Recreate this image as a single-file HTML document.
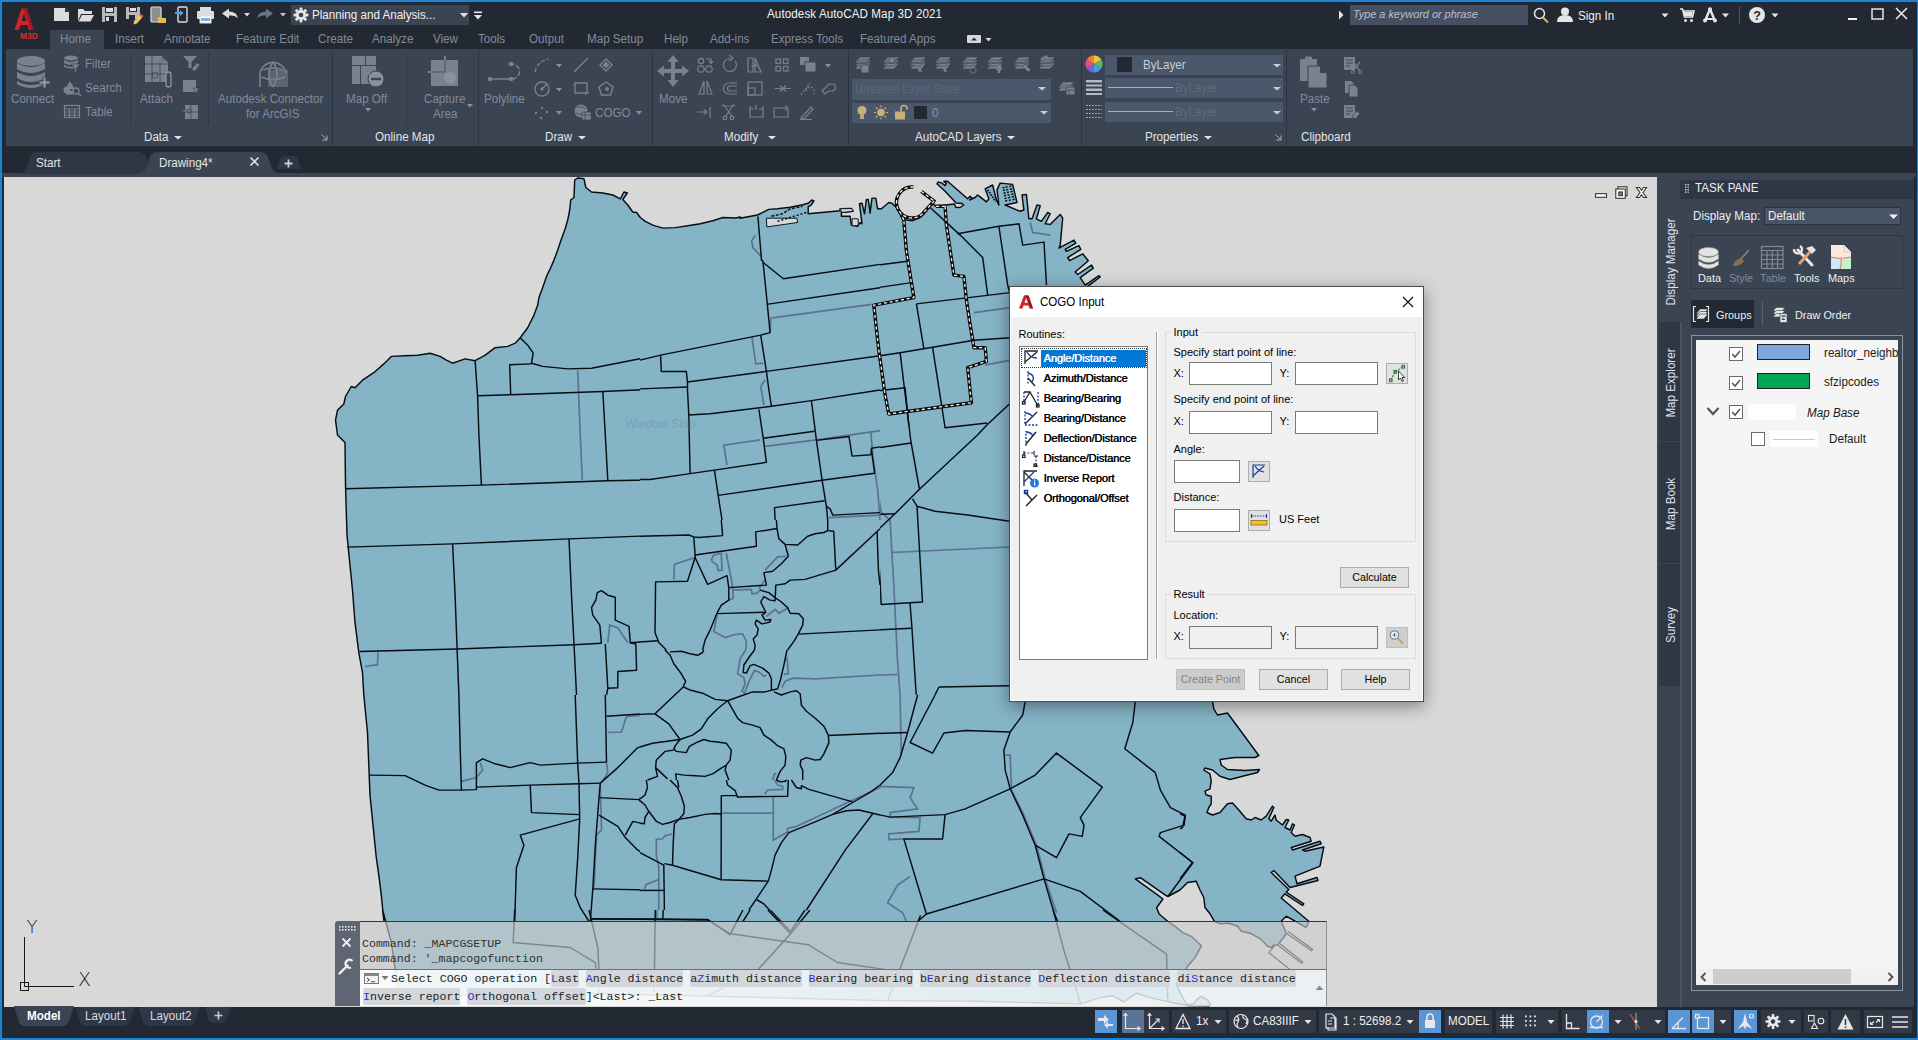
<!DOCTYPE html>
<html lang="en"><head><meta charset="utf-8"><title>Autodesk AutoCAD Map 3D 2021</title>
<style>
*{box-sizing:border-box;margin:0;padding:0}
html,body{width:1918px;height:1040px;overflow:hidden}
body{position:relative;background:#222933;font-family:"Liberation Sans",sans-serif;font-size:12px;color:#e6e6e6}
.a{position:absolute}
.t{position:absolute;white-space:nowrap;line-height:1}
svg{position:absolute;overflow:visible}
.dim{color:#828b9a}
.w{color:#e8e8e8}
.mono{font-family:"Liberation Mono","DejaVu Sans Mono",monospace}
.dlg{font-family:"Liberation Sans",sans-serif;color:#000;font-size:11px}
.inp{position:absolute;background:#fff;border:1px solid #7a7a7a}
.btn{position:absolute;background:#e1e1e1;border:1px solid #adadad;text-align:center;color:#000;font-size:10.7px;line-height:19px}
</style>
</head>
<body>
<div class="a" style="left:0;top:0;width:1918px;height:1040px;background:#1a84d8"></div>
<div class="a" style="left:1.5px;top:1.5px;width:1915px;height:1036px;background:#222933"></div>
<svg style="left:12px;top:6px" width="30" height="36" viewBox="0 0 30 36">
<path d="M2.500 24 L9.500 2.500 L15 2.500 L21.500 24 L17 24 L15.500 19 L8.500 19 L7 24 Z M9.800 15 L14.300 15 L12 7 Z" fill="#d2232a" fill-rule="evenodd"/>
<path d="M9.500 2.500 L15 2.500 L21.500 24 L19 24 L12.500 4.500 Z" fill="#a3151c"/>
<text x="17" y="33" font-family="Liberation Sans, sans-serif" font-weight="bold" font-size="8.5" fill="#e02828" text-anchor="middle">M3D</text></svg>
<svg style="left:0;top:0" width="300" height="28"><path d="M54 8 h11 l4 4 v9 h-15 z" fill="#dcdcdc"/><path d="M65 8 v4 h4 z" fill="#222933"/><path d="M78 9 h5 l2 2 h7 v3 h-11 l-3 7 z" fill="#dcdcdc"/><path d="M82 15 h12 l-3.5 6.5 h-12 z" fill="#dcdcdc"/><path d="M102 7 h15 v15 h-15 z" fill="#b9b9b9"/><rect x="105" y="7" width="9" height="6" fill="#222933"/><rect x="106" y="8" width="7" height="4" fill="#dcdcdc"/><rect x="105" y="16" width="9" height="6" fill="#222933"/><rect x="106" y="17" width="3" height="4" fill="#dcdcdc"/><path d="M126 7 h14 v12 h-14 z" fill="#b9b9b9"/><rect x="129" y="7" width="8" height="5" fill="#222933"/><rect x="130" y="8" width="6" height="3" fill="#dcdcdc"/><rect x="129" y="15" width="6" height="4" fill="#222933"/><path d="M134 21 l6 -7 l3 2.5 l-6 7 l-3.5 1 z" fill="#e8c36a"/><path d="M139 15 l1.5 -1.6 l3 2.5 l-1.5 1.6z" fill="#e05050"/><rect x="151" y="7" width="10" height="15" rx="1" fill="#8e8e8e" stroke="#dcdcdc" stroke-width="1.2"/><path d="M158 17 h3 l1 1 h4 v5 h-8 z" fill="#e8b84a"/><rect x="178" y="7" width="9" height="15" rx="1" fill="#222933" stroke="#dcdcdc" stroke-width="1.4"/><path d="M175 12 h5 v-2 l3.5 3 l-3.5 3 v-2 h-5 z" fill="#52a7e8"/><rect x="200" y="7" width="11" height="5" fill="#dcdcdc"/><rect x="197" y="11" width="17" height="8" rx="1" fill="#dcdcdc"/><rect x="200" y="16" width="11" height="7" fill="#fff" stroke="#dcdcdc" stroke-width="1"/><rect x="201" y="18" width="9" height="3" fill="#6fb4ec"/><path d="M222 13.5 l7 -5 v3 q8 0 9 7 q-3 -3.5 -9 -3 v3 z" fill="#dcdcdc"/><path d="M244 13 h6 l-3 3.5z" fill="#dcdcdc"/><path d="M273 13.5 l-7 -5 v3 q-8 0 -9 7 q3 -3.5 9 -3 v3 z" fill="#6b7380"/><path d="M280 13 h6 l-3 3.5z" fill="#c8c8c8"/></svg>
<div class="a" style="left:291px;top:5px;width:178px;height:20px;background:#3b4453"></div>
<svg style="left:293px;top:7px" width="16" height="16" viewBox="0 0 16 16"><g fill="#e6e6e6"><circle cx="8" cy="8" r="5"/><g id="gt"><rect x="6.6" y="0.6" width="2.8" height="14.8" rx="0.6"/></g><rect x="6.6" y="0.6" width="2.8" height="14.8" rx="0.6" transform="rotate(45 8 8)"/><rect x="6.6" y="0.6" width="2.8" height="14.8" rx="0.6" transform="rotate(90 8 8)"/><rect x="6.6" y="0.6" width="2.8" height="14.8" rx="0.6" transform="rotate(135 8 8)"/></g><circle cx="8" cy="8" r="2.3" fill="#3b4453"/></svg>
<div class="t w" style="left:312px;top:15px;transform-origin:left center;transform:translateY(-50%) scaleX(0.945);font-size:12.3px;color:#f0f0f0">Planning and Analysis...</div>
<svg style="left:459px;top:11px" width="30" height="10"><path d="M1 2 h8 l-4 4.5z" fill="#e6e6e6"/><rect x="15" y="0.5" width="8" height="1.6" fill="#e6e6e6"/><path d="M15 4 h8 l-4 4.5z" fill="#e6e6e6"/></svg>
<div class="t w" style="left:767px;top:14px;transform-origin:left center;transform:translateY(-50%) scaleX(0.945);font-size:12.3px;color:#f2f2f2;letter-spacing:0.1px">Autodesk AutoCAD Map 3D 2021</div>
<svg style="left:1338px;top:10px" width="8" height="10"><path d="M1 0.5 l4.5 4.5 l-4.5 4.5z" fill="#e6e6e6"/></svg>
<div class="a" style="left:1350px;top:5px;width:178px;height:20px;background:#454f61"></div>
<div class="t " style="left:1353px;top:15px;transform-origin:left center;transform:translateY(-50%) scaleX(0.945);font-style:italic;font-size:11.5px;color:#b9c0cc">Type a keyword or phrase</div>
<svg style="left:1532px;top:5px" width="20" height="20"><circle cx="7.5" cy="8.5" r="5" fill="none" stroke="#e6e6e6" stroke-width="1.5"/><path d="M11 12.5 l5 5" stroke="#e8b84a" stroke-width="2"/></svg>
<svg style="left:1556px;top:5px" width="18" height="20"><circle cx="9" cy="6.5" r="4" fill="#e6e6e6"/><path d="M1 17 q0 -7 8 -7 q8 0 8 7 z" fill="#e6e6e6"/></svg>
<div class="t w" style="left:1578px;top:15.5px;transform-origin:left center;transform:translateY(-50%) scaleX(0.945);font-size:12.3px;color:#f0f0f0">Sign In</div>
<svg style="left:1661px;top:13px" width="8" height="6"><path d="M0.5 0.5 h7 l-3.5 4z" fill="#e6e6e6"/></svg>
<svg style="left:1679px;top:7px" width="16" height="16"><path d="M1 2 h2.5 l2 8 h8 l1.5 -6 h-10.5" fill="none" stroke="#e6e6e6" stroke-width="1.6"/><rect x="5" y="5" width="8.5" height="4" fill="#e6e6e6"/><circle cx="6.5" cy="13.5" r="1.5" fill="#e6e6e6"/><circle cx="12.5" cy="13.5" r="1.5" fill="#e6e6e6"/></svg>
<svg style="left:1702px;top:6px" width="30" height="18"><path d="M3 15 L8 3 L13 15" fill="none" stroke="#e6e6e6" stroke-width="2.4" stroke-linejoin="round"/><path d="M3 13 L13 13" stroke="#e6e6e6" stroke-width="2"/><circle cx="8" cy="3.2" r="2" fill="#e6e6e6"/><circle cx="3" cy="14.5" r="2" fill="#e6e6e6"/><circle cx="13" cy="14.5" r="2" fill="#e6e6e6"/><path d="M20 7.5 h7 l-3.5 4z" fill="#e6e6e6"/></svg>
<div class="a" style="left:1739px;top:6px;width:1px;height:18px;background:#4a5363"></div>
<svg style="left:1748px;top:6px" width="34" height="18"><circle cx="9" cy="9" r="8" fill="#e6e6e6"/><text x="9" y="13.5" font-family="Liberation Sans, sans-serif" font-weight="bold" font-size="12.5" fill="#222933" text-anchor="middle">?</text><path d="M23.5 7.5 h7 l-3.5 4z" fill="#e6e6e6"/></svg>
<svg style="left:1840px;top:4px" width="74" height="22"><rect x="8" y="14" width="9" height="2" fill="#f0f0f0"/><rect x="32" y="5" width="11" height="10" fill="none" stroke="#f0f0f0" stroke-width="1.4"/><path d="M56 4 l11 11 M67 4 l-11 11" stroke="#f0f0f0" stroke-width="1.5"/></svg>
<div class="a" style="left:50px;top:30px;width:54px;height:20px;background:#3b4453"></div>
<div class="t dim" style="left:59.5px;top:38.5px;transform-origin:left center;transform:translateY(-50%) scaleX(0.945);font-size:12.3px">Home</div>
<div class="t dim" style="left:115px;top:38.5px;transform-origin:left center;transform:translateY(-50%) scaleX(0.945);font-size:12.3px">Insert</div>
<div class="t dim" style="left:164px;top:38.5px;transform-origin:left center;transform:translateY(-50%) scaleX(0.945);font-size:12.3px">Annotate</div>
<div class="t dim" style="left:236px;top:38.5px;transform-origin:left center;transform:translateY(-50%) scaleX(0.945);font-size:12.3px">Feature Edit</div>
<div class="t dim" style="left:318px;top:38.5px;transform-origin:left center;transform:translateY(-50%) scaleX(0.945);font-size:12.3px">Create</div>
<div class="t dim" style="left:372px;top:38.5px;transform-origin:left center;transform:translateY(-50%) scaleX(0.945);font-size:12.3px">Analyze</div>
<div class="t dim" style="left:433px;top:38.5px;transform-origin:left center;transform:translateY(-50%) scaleX(0.945);font-size:12.3px">View</div>
<div class="t dim" style="left:478px;top:38.5px;transform-origin:left center;transform:translateY(-50%) scaleX(0.945);font-size:12.3px">Tools</div>
<div class="t dim" style="left:529px;top:38.5px;transform-origin:left center;transform:translateY(-50%) scaleX(0.945);font-size:12.3px">Output</div>
<div class="t dim" style="left:587px;top:38.5px;transform-origin:left center;transform:translateY(-50%) scaleX(0.945);font-size:12.3px">Map Setup</div>
<div class="t dim" style="left:664px;top:38.5px;transform-origin:left center;transform:translateY(-50%) scaleX(0.945);font-size:12.3px">Help</div>
<div class="t dim" style="left:709.5px;top:38.5px;transform-origin:left center;transform:translateY(-50%) scaleX(0.945);font-size:12.3px">Add-ins</div>
<div class="t dim" style="left:771px;top:38.5px;transform-origin:left center;transform:translateY(-50%) scaleX(0.945);font-size:12.3px">Express Tools</div>
<div class="t dim" style="left:860px;top:38.5px;transform-origin:left center;transform:translateY(-50%) scaleX(0.945);font-size:12.3px">Featured Apps</div>
<svg style="left:966px;top:34px" width="28" height="10"><rect x="1" y="1" width="14" height="8" rx="1" fill="#d8d8d8"/><path d="M5 6.5 l3 -3 l3 3z" fill="#222933"/><path d="M19.5 4 h6 l-3 3.5z" fill="#d8d8d8"/></svg>
<div class="a" style="left:6px;top:49px;width:1907px;height:97px;background:#3b4453"></div>
<div class="a" style="left:332px;top:50px;width:1px;height:95px;background:#2c3441"></div>
<div class="a" style="left:478px;top:50px;width:1px;height:95px;background:#2c3441"></div>
<div class="a" style="left:652px;top:50px;width:1px;height:95px;background:#2c3441"></div>
<div class="a" style="left:848px;top:50px;width:1px;height:95px;background:#2c3441"></div>
<div class="a" style="left:1081px;top:50px;width:1px;height:95px;background:#2c3441"></div>
<div class="a" style="left:1286px;top:50px;width:1px;height:95px;background:#2c3441"></div>
<div class="a" style="left:130px;top:53px;width:1px;height:72px;background:#2f3745"></div>
<div class="a" style="left:208px;top:53px;width:1px;height:72px;background:#2f3745"></div>
<div class="a" style="left:406px;top:53px;width:1px;height:72px;background:#2f3745"></div>
<svg style="left:0;top:0" width="1918" height="150"><g fill="#778190"><ellipse cx="31" cy="61" rx="14" ry="5"/><path d="M17 63 q14 8 28 0 v6 q-14 8 -28 0z"/><path d="M17 72 q14 8 28 0 v6 q-14 8 -28 0z"/><path d="M17 81 q14 8 28 0 v3 q-14 8 -28 0z" /><path d="M39 81 h4 v-4 h3 v4 h4 v3 h-4 v4 h-3 v-4 h-4z" fill="#8d96a4" stroke="#3b4453" stroke-width="0.8"/></g><g fill="#778190"><ellipse cx="71" cy="58" rx="7" ry="2.5"/><path d="M64 60 q7 4 14 0 v3 q-7 4 -14 0z"/><path d="M64 65 q7 4 14 0 v2 q-5 3 -14 0z"/><path d="M71 64 h9 l-3.5 4 v4 h-2 v-4z" stroke="#3b4453" stroke-width="0.6"/></g><g fill="#778190"><path d="M70 81 l4.5 8 h-9z"/><circle cx="67" cy="90" r="3.5"/><rect x="66" y="91" width="7" height="3.5"/><circle cx="76" cy="91" r="3" fill="none" stroke="#778190" stroke-width="1.3"/><path d="M78 93 l3 3" stroke="#778190" stroke-width="1.4"/></g><g fill="none" stroke="#778190" stroke-width="1.2"><rect x="64.5" y="105.5" width="15" height="12"/><path d="M64.5 109 h15 M64.5 112 h15 M64.5 115 h15 M69.5 109 v8.5 M74.5 109 v8.5"/></g><g fill="#778190"><path d="M145 56 h17 l6 6 v20 h-23z"/><path d="M145 64 h23 M145 74 h23 M152 56 v26 M160 62 v20" stroke="#3b4453" stroke-width="0.8"/><path d="M162 56 v6 h6z" fill="#3b4453"/><path d="M162.5 57.5 v4.5 h4.5z" fill="#778190"/><circle cx="155" cy="75" r="3" fill="none" stroke="#3b4453" stroke-width="0.8"/><rect x="166" y="72" width="5" height="15" rx="2.5" fill="#3b4453" stroke="#8d96a4" stroke-width="1.3"/></g><g fill="#778190"><path d="M183 56 h14 l-5.5 6 v6 h-3 v-6z"/><path d="M192 69 l5 -6 l2.5 2 l-5 6z"/><rect x="183" y="80" width="13" height="12"/><path d="M193 88 h6 l-3 5z" stroke="#3b4453" stroke-width="0.6"/><rect x="185" y="105" width="13" height="14"/><path d="M183 110 h6 v-2 l3 3 l-3 3 v-2 h-6z" stroke="#3b4453" stroke-width="0.6"/><path d="M185 112 h13 M191 105 v14" stroke="#3b4453" stroke-width="0.7"/></g><g fill="none" stroke="#778190" stroke-width="1.6"><path d="M260 87 v-10 a13 13 0 0 1 26 -3"/><path d="M263 70 q10 -4 20 0 M261 77 q12 5 24 0 M273 62 q-8 12 0 25 M273 62 q8 12 0 25"/></g><path d="M268 70 h20 v17 h-20z" fill="#778190" opacity="0.55"/><g fill="#778190"><rect x="352" y="56" width="13" height="9"/><rect x="366" y="56" width="10" height="9"/><rect x="352" y="66" width="8" height="18"/><rect x="361" y="66" width="15" height="18"/><circle cx="376" cy="79" r="8" fill="#8891a0" stroke="#3b4453" stroke-width="1"/><rect x="371" y="77.8" width="10" height="2.4" fill="#3b4453"/></g><g fill="#778190"><rect x="431" y="60" width="27" height="26"/><path d="M428 72 h17 v-16" fill="none" stroke="#8d96a4" stroke-width="1.4"/><path d="M445 60 v12 h-14" fill="none" stroke="#3b4453" stroke-width="1"/><circle cx="450" cy="78" r="6" fill="#8891a0"/></g><g fill="none" stroke="#778190" stroke-width="1.5"><path d="M490 79 h22"/><path d="M512 79 a7.5 7.5 0 0 0 0 -15" stroke-dasharray="5 2"/><circle cx="490" cy="79" r="1.6" fill="#778190"/><circle cx="511" cy="79" r="1.6" fill="#778190"/><circle cx="511" cy="64" r="1.6" fill="#778190"/></g><g fill="none" stroke="#778190" stroke-width="1.4"><path d="M535 72 q2 -10 13 -13" stroke-dasharray="4 2"/><circle cx="542" cy="89" r="7"/><circle cx="542" cy="89" r="1" fill="#778190"/><path d="M543 88 l4 -4"/><path d="M574 72 l14 -14"/><rect x="575" y="83" width="12" height="10"/><path d="M573 85 l4 -3 M585 95 l4 -3" stroke-width="1"/><path d="M606 59 l6 6 l-6 6 l-6 -6z"/><path d="M606 61.5 l3.5 3.5 l-3.5 3.5 l-3.5 -3.5z" fill="#778190" stroke="none"/><path d="M606 82 l7 5 l-2.5 8 h-9 l-2.5 -8z"/><circle cx="607" cy="89" r="1.3" fill="#778190"/></g><g fill="#778190"><circle cx="536" cy="113" r="1.2"/><circle cx="542" cy="108" r="1.2"/><circle cx="547" cy="112" r="1.2"/><circle cx="541" cy="118" r="1.2"/></g><g fill="#778190"><circle cx="581" cy="111" r="6.5"/><path d="M577 108 q4 -3 8 1 M576 113 q5 3 10 -1" stroke="#3b4453" stroke-width="0.8" fill="none"/><rect x="582" y="112" width="9" height="8" stroke="#3b4453" stroke-width="0.7"/><path d="M582 115 h9 M585 112 v8" stroke="#3b4453" stroke-width="0.7"/></g><g fill="#778190"><path d="M673 55 l5.5 7 h-3.5 v7 h7 v-3.5 l7 5.5 l-7 5.5 v-3.500 h-7 v7 h3.500 l-5.500 7 l-5.500 -7 h3.500 v-7 h-7 v3.500 l-7 -5.500 l7 -5.500 v3.500 h7 v-7 h-3.500z"/></g><g fill="none" stroke="#778190" stroke-width="1.2"><circle cx="701" cy="61" r="2.6"/><circle cx="701" cy="69" r="3.2"/><circle cx="709" cy="69" r="3.2"/><path d="M706 59 h5 v4 M709 61 l2 2.5 l2 -2.5"/><path d="M735 61 a6.5 6.5 0 1 1 -5 -2.500"/><path d="M729 55 l4 3 l-4 3" /><path d="M748 58 h5 v14 h-5z M755 58 l6 14 h-6z"/><path d="M751 66 h6 l-2 -2"/><rect x="776" y="59" width="4.500" height="4.500"/><rect x="783.500" y="59" width="4.500" height="4.500"/><rect x="776" y="66.500" width="4.500" height="4.500"/><rect x="783.500" y="66.500" width="4.500" height="4.500"/><path d="M699 94 l5 -13 v13z M712 94 l-5 -13 v13z"/><path d="M737 83 h-8 a5 5 0 0 0 0 11 h8 M737 86 h-7 a2.500 2.500 0 0 0 0 5 h7"/><rect x="748" y="82" width="14" height="13"/><rect x="748" y="88" width="7" height="7"/><path d="M775 88.500 h16 M780 85.500 l3 3 l-3 3 M786 85.500 l-3 3 l3 3"/><path d="M801 95 l9 -12 M806 91 a4 4 0 0 1 8 0 v3" stroke-dasharray="2 1.500"/><path d="M822 91 l7 -7 h3 a3.500 3.500 0 0 1 0 7 h-3 M822 91 l3 3 l4 -3"/><path d="M697 112 h10 M710 107 v11 M704 109.500 l3 2.500 l-3 2.500"/><path d="M723 104 l9 12 M734 104 l-8 12"/><circle cx="725" cy="118" r="1.800"/><circle cx="732" cy="118" r="1.800"/><path d="M721 106 h14" stroke-width="0.8"/><path d="M750 106 v11 h13 v-11 M750 109 h4 M759 109 h4 M756 105 v5"/><path d="M774 108 h14 v9 h-14z M786 105 v6"/><path d="M801 118 l10 -11 l2 2 l-9 10z M800 119.500 h12" /></g><g fill="#778190"><rect x="800" y="57" width="9" height="8"/><rect x="805" y="62" width="11" height="10" stroke="#3b4453" stroke-width="1"/></g><path d="M855 63 l5 -6 h11 l-5 6z M855 66 l5 -6 h11 l-5 6z M855 69 l5 -6 h11 l-5 6z" fill="#778190" stroke="#3b4453" stroke-width="0.7"/><rect x="861" y="65" width="8" height="8" fill="#778190" stroke="#3b4453" stroke-width="0.8"/><path d="M883 63 l5 -6 h11 l-5 6z M883 66 l5 -6 h11 l-5 6z M883 69 l5 -6 h11 l-5 6z" fill="#778190" stroke="#3b4453" stroke-width="0.7"/><circle cx="892" cy="60" r="3" fill="#778190" stroke="#3b4453" stroke-width="0.6"/><path d="M910 63 l5 -6 h11 l-5 6z M910 66 l5 -6 h11 l-5 6z M910 69 l5 -6 h11 l-5 6z" fill="#778190" stroke="#3b4453" stroke-width="0.7"/><path d="M924 64 l-5 7 M919 71 v-3 M919 71 h3" stroke="#778190" stroke-width="1.3" fill="none"/><path d="M935 63 l5 -6 h11 l-5 6z M935 66 l5 -6 h11 l-5 6z M935 69 l5 -6 h11 l-5 6z" fill="#778190" stroke="#3b4453" stroke-width="0.7"/><path d="M949 64 l-5 7 M944 71 v-3 M944 71 h3" stroke="#778190" stroke-width="1.3" fill="none"/><path d="M962 63 l5 -6 h11 l-5 6z M962 66 l5 -6 h11 l-5 6z M962 69 l5 -6 h11 l-5 6z" fill="#778190" stroke="#3b4453" stroke-width="0.7"/><circle cx="973" cy="70" r="3" fill="none" stroke="#778190" stroke-width="1.2" stroke-dasharray="1.5 1"/><path d="M987 63 l5 -6 h11 l-5 6z M987 66 l5 -6 h11 l-5 6z M987 69 l5 -6 h11 l-5 6z" fill="#778190" stroke="#3b4453" stroke-width="0.7"/><circle cx="999" cy="68" r="2.8" fill="#778190"/><rect x="997.8" y="70" width="2.4" height="3" fill="#778190"/><path d="M1014 63 l5 -6 h11 l-5 6z M1014 66 l5 -6 h11 l-5 6z M1014 69 l5 -6 h11 l-5 6z" fill="#778190" stroke="#3b4453" stroke-width="0.7"/><path d="M1022 66 l6 6 l3 -2 l-6 -6z" fill="#778190" stroke="#3b4453" stroke-width="0.6"/><path d="M1039 63 l5 -6 h11 l-5 6z M1039 66 l5 -6 h11 l-5 6z M1039 69 l5 -6 h11 l-5 6z" fill="#778190" stroke="#3b4453" stroke-width="0.7"/><path d="M1041 60 q1 -4 6 -3 l-1 -2 M1047 57 l-2.5 1" stroke="#778190" stroke-width="1.2" fill="none"/><path d="M1058 88 l5 -6 h11 l-5 6z M1058 91 l5 -6 h11 l-5 6z" fill="#778190" stroke="#3b4453" stroke-width="0.6"/><rect x="1066" y="87" width="9" height="8" fill="#778190" stroke="#3b4453" stroke-width="0.8"/><path d="M1066 90 h9 M1069 90 v5" stroke="#3b4453" stroke-width="0.7"/><g transform="translate(1094 64)"><path d="M0 0 L0 -8.500 A8.500 8.500 0 0 1 7.360 -4.250z" fill="#f0c23c"/><path d="M0 0 L7.360 -4.250 A8.500 8.500 0 0 1 7.360 4.250z" fill="#5dbb5a"/><path d="M0 0 L7.360 4.250 A8.500 8.500 0 0 1 0 8.500z" fill="#3f9fe0"/><path d="M0 0 L0 8.500 A8.500 8.500 0 0 1 -7.360 4.250z" fill="#7b5fd0"/><path d="M0 0 L-7.360 4.250 A8.500 8.500 0 0 1 -7.360 -4.250z" fill="#e0508c"/><path d="M0 0 L-7.360 -4.250 A8.500 8.500 0 0 1 0 -8.500z" fill="#f07a3c"/></g><g fill="#b4bac4"><rect x="1086" y="80" width="16" height="2.500"/><rect x="1086" y="84.500" width="16" height="2"/><rect x="1086" y="88.500" width="16" height="2.500"/><rect x="1086" y="93" width="16" height="2"/></g><g stroke="#9aa2af" stroke-width="1.2" stroke-dasharray="2 1"><path d="M1086 105.500 h16 M1086 109.500 h16 M1086 113.500 h16 M1086 117.500 h16"/></g><g fill="#778190"><rect x="1300" y="59" width="17" height="22" rx="1"/><rect x="1305" y="56.500" width="7" height="4" rx="1"/><path d="M1308 66 h12 l7 7 v15 h-19z" stroke="#3b4453" stroke-width="1"/><path d="M1320 66 v7 h7z" fill="#3b4453"/></g><g fill="#778190"><rect x="1344" y="57" width="11" height="13"/><path d="M1346 60 h7 M1346 63 h7 M1346 66 h4" stroke="#3b4453" stroke-width="1"/><path d="M1353 62 l7 9 M1360 62 l-7 9" stroke="#778190" stroke-width="1.3"/><circle cx="1353" cy="72" r="1.6" fill="none" stroke="#778190"/><circle cx="1360" cy="72" r="1.6" fill="none" stroke="#778190"/><path d="M1345 81 h6 l3 3 v9 h-9z"/><path d="M1349 85 h6 l3 3 v9 h-9z" stroke="#3b4453" stroke-width="0.9"/><rect x="1344" y="105" width="11" height="13"/><path d="M1346 108 h7 M1346 111 h7 M1346 114 h4" stroke="#3b4453" stroke-width="1"/><path d="M1352 116 l5 -5 l3 3 l-5 5z" stroke="#3b4453" stroke-width="0.7"/></g></svg>
<div class="t dim" style="left:11px;top:98.5px;transform-origin:left center;transform:translateY(-50%) scaleX(0.945);font-size:12.3px">Connect</div>
<div class="t dim" style="left:85px;top:63.5px;transform-origin:left center;transform:translateY(-50%) scaleX(0.945);font-size:12.3px">Filter</div>
<div class="t dim" style="left:85px;top:88px;transform-origin:left center;transform:translateY(-50%) scaleX(0.945);font-size:12.3px">Search</div>
<div class="t dim" style="left:85px;top:112px;transform-origin:left center;transform:translateY(-50%) scaleX(0.945);font-size:12.3px">Table</div>
<div class="t dim" style="left:140px;top:98.5px;transform-origin:left center;transform:translateY(-50%) scaleX(0.945);font-size:12.3px">Attach</div>
<div class="t dim" style="left:218px;top:98.5px;transform-origin:left center;transform:translateY(-50%) scaleX(0.945);font-size:12.3px">Autodesk Connector</div>
<div class="t dim" style="left:246px;top:113.5px;transform-origin:left center;transform:translateY(-50%) scaleX(0.945);font-size:12.3px">for ArcGIS</div>
<div class="t dim" style="left:346px;top:98.5px;transform-origin:left center;transform:translateY(-50%) scaleX(0.945);font-size:12.3px">Map Off</div>
<svg style="left:365.0px;top:108px" width="6" height="4"><path d="M0 0 h6 l-3.0 3.5z" fill="#8891a0"/></svg>
<div class="t dim" style="left:423.5px;top:98.5px;transform-origin:left center;transform:translateY(-50%) scaleX(0.945);font-size:12.3px">Capture</div>
<div class="t dim" style="left:432.5px;top:113.5px;transform-origin:left center;transform:translateY(-50%) scaleX(0.945);font-size:12.3px">Area</div>
<svg style="left:467.0px;top:104px" width="6" height="4"><path d="M0 0 h6 l-3.0 3.5z" fill="#8891a0"/></svg>
<div class="t dim" style="left:484px;top:98.5px;transform-origin:left center;transform:translateY(-50%) scaleX(0.945);font-size:12.3px">Polyline</div>
<svg style="left:556.0px;top:64px" width="6" height="4"><path d="M0 0 h6 l-3.0 3.5z" fill="#8891a0"/></svg>
<svg style="left:556.0px;top:88px" width="6" height="4"><path d="M0 0 h6 l-3.0 3.5z" fill="#8891a0"/></svg>
<svg style="left:556.0px;top:111px" width="6" height="4"><path d="M0 0 h6 l-3.0 3.5z" fill="#8891a0"/></svg>
<div class="t dim" style="left:595px;top:113px;transform-origin:left center;transform:translateY(-50%) scaleX(0.945);font-size:12.3px">COGO</div>
<svg style="left:636.0px;top:111px" width="6" height="4"><path d="M0 0 h6 l-3.0 3.5z" fill="#8891a0"/></svg>
<div class="t dim" style="left:658.5px;top:98.5px;transform-origin:left center;transform:translateY(-50%) scaleX(0.945);font-size:12.3px">Move</div>
<svg style="left:825.0px;top:64px" width="6" height="4"><path d="M0 0 h6 l-3.0 3.5z" fill="#8891a0"/></svg>
<div class="t " style="left:144px;top:137px;transform-origin:left center;transform:translateY(-50%) scaleX(0.945);font-size:12.3px;color:#e4e4e4">Data</div>
<svg style="left:174.0px;top:136px" width="8" height="4"><path d="M0 0 h8 l-4.0 3.5z" fill="#e4e4e4"/></svg>
<div class="t " style="left:375px;top:137px;transform-origin:left center;transform:translateY(-50%) scaleX(0.945);font-size:12.3px;color:#e4e4e4">Online Map</div>
<div class="t " style="left:545px;top:137px;transform-origin:left center;transform:translateY(-50%) scaleX(0.945);font-size:12.3px;color:#e4e4e4">Draw</div>
<svg style="left:578.0px;top:136px" width="8" height="4"><path d="M0 0 h8 l-4.0 3.5z" fill="#e4e4e4"/></svg>
<div class="t " style="left:724px;top:137px;transform-origin:left center;transform:translateY(-50%) scaleX(0.945);font-size:12.3px;color:#e4e4e4">Modify</div>
<svg style="left:768.0px;top:136px" width="8" height="4"><path d="M0 0 h8 l-4.0 3.5z" fill="#e4e4e4"/></svg>
<div class="t " style="left:915px;top:137px;transform-origin:left center;transform:translateY(-50%) scaleX(0.945);font-size:12.3px;color:#e4e4e4">AutoCAD Layers</div>
<svg style="left:1007.0px;top:136px" width="8" height="4"><path d="M0 0 h8 l-4.0 3.5z" fill="#e4e4e4"/></svg>
<div class="t " style="left:1144.5px;top:137px;transform-origin:left center;transform:translateY(-50%) scaleX(0.945);font-size:12.3px;color:#e4e4e4">Properties</div>
<svg style="left:1204.0px;top:136px" width="8" height="4"><path d="M0 0 h8 l-4.0 3.5z" fill="#e4e4e4"/></svg>
<div class="t " style="left:1301px;top:137px;transform-origin:left center;transform:translateY(-50%) scaleX(0.945);font-size:12.3px;color:#e4e4e4">Clipboard</div>
<svg style="left:321px;top:134px" width="7" height="7"><path d="M0.5 0.5 l5 5 M6 1.500 v4.500 h-4.500" stroke="#aab1bc" stroke-width="1" fill="none"/></svg>
<svg style="left:1275px;top:134px" width="7" height="7"><path d="M0.5 0.5 l5 5 M6 1.500 v4.500 h-4.500" stroke="#aab1bc" stroke-width="1" fill="none"/></svg>
<div class="a" style="left:851.5px;top:79px;width:199px;height:20.5px;background:#4b576a"></div>
<div class="t " style="left:855px;top:89px;transform-origin:left center;transform:translateY(-50%) scaleX(0.91);font-size:12.3px;color:#5b6779">Unsaved Layer State</div>
<svg style="left:1038.0px;top:87px" width="8" height="4"><path d="M0 0 h8 l-4.0 3.5z" fill="#c8ccd4"/></svg>
<div class="a" style="left:851.5px;top:102.8px;width:199px;height:20.5px;background:#4b576a"></div>
<svg style="left:852px;top:102px" width="100" height="21"><circle cx="10" cy="8.500" r="4.500" fill="#c8b078"/><rect x="8" y="13" width="4" height="4" fill="#b0a888"/><circle cx="29" cy="10.500" r="3.800" fill="#c8b078"/><g stroke="#c8b078" stroke-width="1.200"><path d="M29 3.500 v2 M29 15.500 v2 M22 10.500 h2 M34 10.500 h2 M24 5.500 l1.500 1.500 M32.500 14 l1.500 1.500 M34 5.500 l-1.500 1.500 M25.500 14 l-1.500 1.500"/></g><rect x="43" y="9.500" width="10" height="8" fill="#c8b078"/><path d="M49 9.500 v-3 a3 3 0 0 1 6 0 v1" fill="none" stroke="#c8b078" stroke-width="1.600"/><rect x="62" y="4" width="13" height="13" fill="#222933"/></svg>
<div class="t " style="left:932px;top:112.5px;transform-origin:left center;transform:translateY(-50%) scaleX(0.945);font-size:12.3px;color:#8d96a4">0</div>
<svg style="left:1040.0px;top:111px" width="8" height="4"><path d="M0 0 h8 l-4.0 3.5z" fill="#c8ccd4"/></svg>
<div class="a" style="left:1105px;top:54.7px;width:178px;height:20.4px;background:#4b576a"></div>
<div class="a" style="left:1117px;top:57px;width:15px;height:15px;background:#222933"></div>
<div class="t " style="left:1143px;top:65px;transform-origin:left center;transform:translateY(-50%) scaleX(0.945);font-size:12.3px;color:#c9ced6">ByLayer</div>
<svg style="left:1273.0px;top:64px" width="8" height="4"><path d="M0 0 h8 l-4.0 3.5z" fill="#c8ccd4"/></svg>
<div class="a" style="left:1105px;top:77.9px;width:178px;height:20.4px;background:#4b576a"></div>
<div class="a" style="left:1108px;top:86.9px;width:65px;height:1px;background:#aab1bc"></div>
<div class="t " style="left:1175px;top:88.4px;transform-origin:left center;transform:translateY(-50%) scaleX(0.945);font-size:12.3px;color:#5f6a7c">ByLayer</div>
<svg style="left:1273.0px;top:86.9px" width="8" height="4"><path d="M0 0 h8 l-4.0 3.5z" fill="#c8ccd4"/></svg>
<div class="a" style="left:1105px;top:101.6px;width:178px;height:20.4px;background:#4b576a"></div>
<div class="a" style="left:1108px;top:110.6px;width:65px;height:1px;background:#aab1bc"></div>
<div class="t " style="left:1175px;top:112.1px;transform-origin:left center;transform:translateY(-50%) scaleX(0.945);font-size:12.3px;color:#5f6a7c">ByLayer</div>
<svg style="left:1273.0px;top:110.6px" width="8" height="4"><path d="M0 0 h8 l-4.0 3.5z" fill="#c8ccd4"/></svg>
<div class="t dim" style="left:1300px;top:98.5px;transform-origin:left center;transform:translateY(-50%) scaleX(0.945);font-size:12.3px">Paste</div>
<svg style="left:1311.0px;top:108px" width="6" height="4"><path d="M0 0 h6 l-3.0 3.5z" fill="#8891a0"/></svg>
<div class="a" style="left:2px;top:173px;width:1914px;height:4px;background:#3b4453"></div>
<svg style="left:0;top:151px" width="320" height="24"><path d="M16 23 q8 0 11 -8 l3 -9 q2 -5 8 -5 h100 q6 0 8 5 l3 9 q3 8 11 8z" fill="#2f3746"/><path d="M136 23 q8 0 11 -8 l3 -9 q2 -5 8 -5 h102 q6 0 8 5 l3 9 q3 8 11 8z" fill="#3b4453"/><path d="M276 18 l4 -10 q1.500 -3 5 -3 h8 q4 0 5 3 l3 10z" fill="#2f3746"/><path d="M284.500 12.500 h8 M288.500 8.500 v8" stroke="#c8ccd4" stroke-width="1.800"/><path d="M250.500 6.500 l8 8 M258.500 6.500 l-8 8" stroke="#d8dbe0" stroke-width="1.700"/></svg>
<div class="t " style="left:36px;top:162.5px;transform-origin:left center;transform:translateY(-50%) scaleX(0.945);font-size:12.3px;color:#e4e4e4">Start</div>
<div class="t " style="left:159px;top:162.5px;transform-origin:left center;transform:translateY(-50%) scaleX(0.945);font-size:12.3px;color:#e4e4e4">Drawing4*</div>
<div class="a" style="left:4px;top:177px;width:1653px;height:830px;background:#d8d8d8"></div>
<svg style="left:0;top:0" width="1918" height="1040" viewBox="0 0 1918 1040"><defs><clipPath id="vp"><rect x="4" y="177" width="1653" height="830"/></clipPath></defs><g clip-path="url(#vp)"><path d="M402.6 1005.1 L398.8 990.1 L395.6 972.6 L391.3 942.5 L382.6 910.0 L383.8 920.2 L381.3 895.2 L378.8 875.2 L376.3 857.7 L372.5 820.1 L370.0 795.1 L368.8 765.1 L367.5 732.5 L363.8 695.0 L362.5 672.7 L358.8 652.7 L355.0 622.7 L352.5 590.2 L349.5 560.1 L347.0 535.1 L345.5 485.1 L345.0 442.5 L337.5 435.0 L335.5 420.2 L337.5 410.2 L343.8 404.0 L345.5 396.5 L351.3 386.5 L355.0 387.7 L362.5 380.2 L373.8 372.7 L383.8 363.9 L391.3 356.4 L405.1 355.7 L417.6 355.2 L430.1 353.2 L440.1 356.4 L446.4 360.2 L452.6 363.2 L465.1 358.9 L475.1 360.7 L485.2 355.2 L495.2 347.7 L507.7 346.4 L515.2 343.2 L520.2 337.7 L527.7 327.7 L534.0 315.1 L537.7 305.1 L539.0 297.6 L542.7 287.6 L546.5 276.4 L550.2 268.8 L554.0 260.1 L557.7 250.1 L561.5 238.8 L565.2 228.8 L567.7 220.0 L569.7 210.0 L570.7 200.0 L574.0 197.5 L574.7 180.0 L577.7 178.0 L584.0 178.8 L585.8 187.5 L591.5 192.0 L602.8 193.0 L612.8 195.0 L620.3 198.8 L624.0 192.0 L627.3 193.0 L622.8 199.5 L627.8 205.0 L632.8 212.0 L636.6 212.5 L640.3 217.5 L645.3 221.3 L652.8 225.1 L662.8 228.1 L675.3 227.6 L687.9 225.8 L700.4 223.8 L712.9 220.8 L722.9 217.5 L735.4 218.0 L740.4 217.0 L740.0 218.2 L757.5 215.0 L768.8 209.4 L777.5 208.8 L790.1 207.3 L802.6 204.8 L808.2 203.2 L811.9 200.0 L813.8 201.0 L811.3 204.8 L808.2 206.9 L808.2 213.8 L840.1 210.7 L840.1 208.8 L851.4 208.5 L853.2 211.3 L841.4 212.5 L841.4 216.3 L850.1 216.3 L851.4 225.1 L857.6 226.3 L860.1 222.5 L862.0 223.8 L859.5 203.8 L862.0 203.2 L864.5 213.8 L866.4 199.4 L868.3 199.4 L870.1 213.2 L872.0 198.1 L875.8 198.1 L877.6 208.8 L881.4 208.8 L888.9 202.5 L892.0 203.2 L895.8 206.9 L901.4 216.3 L906.4 220.0 L912.7 220.7 L920.2 217.5 L926.4 211.3 L930.2 205.0 L934.6 204.4 L935.2 206.3 L954.4 204.0 L955.7 207.3 L960.1 207.5 L963.6 205.0 L962.0 203.5 L956.1 203.0 L945.1 191.3 L936.9 183.8 L938.2 181.9 L941.9 183.1 L945.1 185.6 L946.3 183.1 L943.8 181.3 L947.6 181.3 L967.6 198.8 L970.1 196.3 L972.0 198.1 L969.5 200.0 L975.1 197.5 L977.6 195.0 L980.1 196.9 L986.4 201.9 L988.9 198.8 L985.1 188.8 L992.6 185.0 L996.4 200.0 L998.9 205.0 L997.0 190.0 L1000.1 183.1 L1012.6 184.4 L1017.0 202.5 L1005.1 205.0 L1020.1 211.3 L1023.9 210.0 L1022.0 195.0 L1026.4 194.4 L1028.9 218.8 L1032.0 218.8 L1037.0 205.0 L1040.2 205.7 L1036.4 218.8 L1041.4 221.3 L1047.7 212.5 L1050.2 213.8 L1045.2 223.8 L1050.2 224.4 L1060.2 214.4 L1062.7 218.2 L1060.2 245.1 L1058.9 248.2 L1073.9 240.1 L1075.8 243.2 L1065.2 249.4 L1066.4 251.3 L1078.9 245.7 L1080.8 249.4 L1067.7 257.6 L1069.6 260.7 L1082.7 253.8 L1088.3 260.7 L1075.2 272.0 L1077.7 274.5 L1091.5 265.1 L1093.3 268.2 L1080.2 277.6 L1085.2 285.1 L1099.0 275.7 L1100.2 277.0 L1087.7 286.4 L1092.7 290.1 L1300 420 L1330 520 L1300 620 L1230 700 L1212.5 701.2 L1213.8 708.8 L1217.5 715.0 L1227.5 713.0 L1258.8 755.5 L1255.0 757.5 L1235.0 757.5 L1220.0 759.5 L1221.2 765.0 L1227.5 769.5 L1245.0 770.5 L1259.5 769.5 L1257.5 772.5 L1242.5 776.2 L1230.0 779.5 L1220.0 776.2 L1212.5 770.0 L1205.0 768.0 L1203.8 770.0 L1210.0 773.8 L1211.2 781.2 L1210.0 788.8 L1205.0 791.2 L1206.2 795.0 L1211.2 796.2 L1211.2 803.8 L1208.8 807.5 L1207.0 812.5 L1212.5 815.0 L1220.0 812.5 L1227.5 803.8 L1232.5 803.0 L1238.8 810.0 L1246.2 818.8 L1251.2 820.0 L1255.0 817.5 L1261.2 820.0 L1266.2 816.2 L1272.5 806.2 L1273.8 807.5 L1268.8 818.8 L1271.2 821.2 L1275.0 815.0 L1276.2 820.0 L1282.5 825.0 L1286.2 819.5 L1288.8 820.0 L1285.0 827.5 L1290.0 830.0 L1292.5 823.8 L1294.5 825.0 L1291.2 832.5 L1295.0 836.2 L1302.5 834.5 L1310.0 837.5 L1311.2 841.2 L1291.2 847.5 L1292.5 850.0 L1320.0 841.2 L1321.2 843.8 L1302.5 850.0 L1305.0 851.2 L1323.8 847.0 L1320.0 866.2 L1295.0 876.2 L1297.0 883.8 L1317.0 877.5 L1318.0 880.5 L1295.0 886.2 L1290.0 887.5 L1273.8 870.5 L1271.2 872.5 L1288.8 889.5 L1286.2 892.0 L1303.8 903.8 L1302.5 905.5 L1285.0 893.8 L1281.2 898.0 L1308.8 921.2 L1306.2 927.5 L1286.2 916.2 L1281.2 921.2 L1286.4 933.8 L1277.7 945.1 L1273.9 945.1 L1271.4 947.6 L1267.7 946.3 L1260.2 938.8 L1250.2 933.2 L1241.4 931.3 L1237.6 926.3 L1228.9 923.2 L1220.1 923.8 L1214.5 921.3 L1210.0 913.8 L1205.0 907.5 L1203.8 897.5 L1200.0 890.0 L1196.2 881.2 L1187.5 882.5 L1180.0 890.0 L1167.9 896.5 L1165.4 895.2 L1140.3 877.7 L1135.3 878.9 L1157.8 895.2 L1162.9 899.0 L1156.6 907.7 L1159.1 914.0 L1167.9 921.5 L1175.1 926.3 L1182.6 932.6 L1191.3 936.3 L1201.4 945.7 L1195.1 957.6 L1187.6 966.3 L1182.6 975.1 L1176.3 983.9 L1180.1 992.6 L1186.3 1003.9 L1192.6 1004.5 L1197.6 998.9 L1201.4 996.4 L1207.6 1000.1 L1210.7 1004.5 L1208.9 1005.8 L1187.6 1005.5 L1175.1 1003.2 L1150.1 997.6 L1136.3 993.2 L1123.8 1002.0 L1112.5 995.7 L1100.0 997.6 L1080.8 1003.9 L975.8 1001.2 L887.4 1000.6 L580.3 993.1 L480.2 992.6 Z" fill="#85b4c6" stroke="#070c14" stroke-width="1.45" stroke-linejoin="round"/><g fill="none" stroke="#5c728e" stroke-width="1.7"><path d="M755.4 235.1 L751.7 240.6 L752.9 247.6 L760.9 256.3"/><path d="M769.2 318.9 L810.0 312.6"/><path d="M810.0 312.6 L872.6 305.1"/><path d="M752.9 336.4 L755.4 363.9 L765.4 363.9"/><path d="M765.4 380.2 L760.4 387.7 L764.2 407.7"/><path d="M577.7 370.2 L580.3 435.0"/><path d="M580.3 435.0 L582.3 480.0"/><path d="M973.9 312.6 L1010.2 307.6"/><path d="M1030.2 222.5 L1032.7 232.6 L1050.2 235.1"/><path d="M985.2 365.2 L1010.2 360.2"/><path d="M724.1 465.0 L724.1 445.0 L762.9 440.0 L810.0 435.0"/><path d="M674.1 580.1 L675.3 565.1 L694.1 557.6"/><path d="M714.1 627.7 L725.4 635.2 L740.4 635.2 L746.7 642.7 L740.4 672.7 L745.4 690.3"/><path d="M365.0 666.5 L377.5 664.7 L378.0 652.2"/><path d="M607.8 642.7 L609.8 625.2 L617.8 627.7 L627.8 642.7"/><path d="M712.9 555.1 L711.6 561.4 L717.9 565.1 L718.4 571.4 L721.6 571.4 L720.4 552.6"/><path d="M726.6 552.6 L732.9 586.4"/><path d="M732.9 595.2 L734.2 588.9 L755.4 587.7 L756.7 592.7 L765.4 590.2"/><path d="M765.4 615.2 L772.9 610.2 L777.9 613.9 L783.0 608.9 L793.0 610.2"/><path d="M742.9 690.3 L752.9 672.7 L762.9 675.2 L770.4 685.3"/><path d="M780.5 685.3 L788.0 679.0 L810.0 675.2"/><path d="M871.2 435.0 L875.0 475.0 L881.2 512.5 L890.0 520.0 L893.8 585.0 L897.5 660.0 L900.0 694.8"/><path d="M891.2 552.5 L1009.5 547.0"/><path d="M780.0 678.8 L897.5 674.5"/><path d="M787.5 647.5 L785.0 672.5 L787.5 673.8"/><path d="M461.4 781.3 L476.4 777.6 L482.7 770.1 L480.2 762.6"/><path d="M607.8 732.5 L621.5 732.0 L626.5 716.3 L655.3 714.5"/><path d="M655.3 838.9 L657.8 890.2 L656.6 919.0"/><path d="M655.3 838.9 L665.3 835.1 L672.8 833.9"/><path d="M772.9 797.6 L772.9 840.1 L788.0 831.4 L788.0 826.4 L810.0 820.1"/><path d="M644.1 888.9 L646.6 882.7 L657.8 878.9"/><path d="M600.3 785.1 L601.5 830.1 L596.5 835.1 L594.0 887.7"/><path d="M606.5 762.1 L607.8 772.6 L601.5 782.6"/><path d="M721.6 813.1 L772.9 812.6"/><path d="M766.7 793.8 L767.9 790.1 L783.0 789.6 L783.0 781.3 L775.4 778.8 L777.9 773.8"/><path d="M900.1 695.0 L901.3 755.1"/><path d="M810.0 820.1 L832.5 815.1 L877.6 786.3 L913.9 787.6 L910.1 797.6 L917.6 808.9 L890.1 812.6 L890.1 817.1 L920.1 817.6 L918.9 831.4 L888.8 833.9 L888.8 839.6 L903.8 838.9"/><path d="M1005.2 755.1 L1010.2 755.1 L1011.5 787.6"/><path d="M910.1 876.4 L897.6 885.2 L887.6 902.7 L902.6 912.7 L906.3 921.5"/><path d="M1011.5 790.1 L1022.7 812.6 L1036.5 845.2 L1045.2 878.9 L1056.5 912.7"/></g><g fill="none" stroke="#070c14" stroke-width="1.45" stroke-linejoin="round"><path d="M475.1 360.7 L477.6 395.7 L478.9 435.0"/><path d="M478.9 435.0 L481.4 485.1"/><path d="M478.1 395.7 L510.7 394.7 L602.8 391.5 L686.6 387.7"/><path d="M510.7 394.7 L509.7 364.7 L531.5 363.9"/><path d="M520.2 337.7 L527.7 345.2 L533.2 353.2 L531.5 363.2 L542.7 366.4 L567.7 368.9 L591.5 368.2 L660.3 354.7 L755.4 334.7 L769.9 332.2"/><path d="M602.8 391.5 L605.3 435.0"/><path d="M605.3 435.0 L607.8 480.8"/><path d="M660.3 354.7 L661.6 371.4 L686.6 371.9 L687.9 387.7 L689.9 435.0"/><path d="M689.6 435.0 L690.4 473.8"/><path d="M757.9 216.3 L761.7 262.6 L766.7 305.1 L769.9 332.2"/><path d="M761.7 262.6 L783.0 278.1 L810.0 273.8"/><path d="M766.7 304.6 L810.0 297.6"/><path d="M762.4 335.2 L766.7 370.2 L771.7 406.5"/><path d="M687.9 382.2 L766.7 370.7 L810.0 363.9"/><path d="M689.1 415.2 L771.7 406.5 L810.0 400.2"/><path d="M759.2 410.2 L762.9 435.0"/><path d="M762.9 435.0 L766.7 462.0"/><path d="M810.0 273.8 L907.6 261.3"/><path d="M810.0 297.6 L911.4 282.6"/><path d="M810.0 363.9 L880.1 352.7"/><path d="M810.0 400.2 L882.6 390.2 L905.1 387.7 L908.8 425.3"/><path d="M930.1 207.5 L960.2 235.1 L982.7 257.6 L987.7 295.1"/><path d="M957.6 233.8 L998.9 226.3 L1019.0 223.8 L1022.7 245.1 L1044.0 242.1 L1046.5 285.1"/><path d="M998.9 226.3 L1007.7 285.1 L1010.2 295.1"/><path d="M916.4 303.9 L1010.2 292.6"/><path d="M916.4 303.9 L923.9 348.9"/><path d="M880.1 355.7 L900.1 352.7 L973.9 340.2 L1010.2 337.7"/><path d="M900.1 352.7 L910.1 435.0"/><path d="M932.6 347.7 L945.1 427.8 L987.4 423.0"/><path d="M977.4 435.0 L987.4 424.5 L1010.2 403.2"/><path d="M910.0 435.0 L911.2 443.0"/><path d="M810.0 425.3 L817.5 424.0 L820.0 435.0"/><path d="M345.5 488.8 L481.4 485.1 L607.8 480.8 L649.1 480.0 L690.4 473.8 L766.7 462.0 L810.0 455.0"/><path d="M715.4 471.3 L719.1 495.1 L724.1 535.1"/><path d="M719.1 495.1 L810.0 481.3"/><path d="M347.0 547.1 L452.6 543.9 L569.0 538.9 L652.8 535.6 L690.4 535.1 L697.9 537.6 L724.1 535.1"/><path d="M452.6 543.9 L455.1 595.2 L457.1 649.0 L458.9 695.0"/><path d="M569.0 538.9 L571.5 595.2 L574.0 644.0 L576.5 695.0"/><path d="M359.5 651.5 L457.1 649.0 L574.0 644.7 L601.5 643.2"/><path d="M694.1 537.6 L695.9 556.4 L755.4 547.6 L756.7 531.3 L777.9 528.3 L775.4 507.6 L810.0 502.1"/><path d="M777.9 528.3 L780.5 537.6 L788.0 545.1 L800.5 544.6 L810.0 536.4"/><path d="M695.9 556.4 L687.4 581.4 L655.3 582.6 L654.8 632.7 L660.3 640.2 L667.8 651.5 L685.4 652.7 L697.9 655.2 L705.4 642.7 L710.4 625.2 L720.4 607.7 L729.1 598.9 L726.6 576.4 L706.6 584.4 L695.9 556.4"/><path d="M601.5 643.2 L599.8 625.2 L592.8 615.2 L591.5 607.7 L595.8 600.2 L597.3 592.7 L601.5 590.7 L607.8 595.2 L615.3 597.2 L615.3 620.2 L629.0 626.4 L630.3 642.7 L635.8 644.0 L636.6 670.2 L617.8 671.5 L617.8 687.8 L607.8 688.3 L605.3 644.0"/><path d="M630.3 642.7 L655.3 640.7"/><path d="M727.9 587.2 L765.4 585.2 L764.2 573.9 L774.2 570.1 L786.7 557.6 L788.0 545.1"/><path d="M717.4 613.2 L765.4 612.2 L760.4 597.7 L766.7 591.4 L775.4 597.7 L775.4 585.2 L810.0 578.9"/><path d="M766.7 591.4 L780.5 595.2 L793.0 607.7 L803.0 617.7 L800.5 632.7 L793.0 642.7 L788.0 660.2 L783.0 675.2 L777.9 690.3 L771.7 687.8 L770.4 675.2 L760.4 666.5 L750.4 665.2 L742.9 675.2 L747.9 687.8 L755.4 691.5"/><path d="M765.4 612.2 L770.4 620.2 L755.4 625.2 L752.9 635.2 L755.4 642.7 L750.4 652.7 L742.9 667.7"/><path d="M667.8 651.5 L675.3 665.2 L685.4 680.2 L680.4 695.0"/><path d="M800.5 633.9 L810.0 633.2"/><path d="M607.8 688.3 L606.5 695.0"/><path d="M977.5 435.0 L920.0 488.8 L895.0 513.8 L835.5 570.0"/><path d="M780.0 486.2 L822.5 480.5 L873.8 473.8 L871.2 448.8 L911.2 443.0 L919.5 489.5"/><path d="M816.2 435.0 L822.5 480.5 L827.5 507.5 L833.8 516.2 L895.0 513.8"/><path d="M848.8 435.0 L852.5 456.2 L871.2 453.8"/><path d="M780.0 507.5 L825.0 500.5"/><path d="M827.5 507.5 L828.8 531.2 L812.5 535.0 L800.0 545.0 L785.0 545.0 L780.0 540.0"/><path d="M828.8 531.2 L833.0 532.0 L835.5 570.0 L805.0 580.0 L780.0 585.0"/><path d="M877.5 532.5 L881.2 604.5 L922.5 602.0 L917.0 506.2"/><path d="M912.5 498.8 L917.0 506.2 L935.0 511.2 L967.5 515.0 L1009.5 521.2"/><path d="M910.0 603.0 L912.0 628.8 L916.2 694.8"/><path d="M798.8 633.8 L911.2 628.2"/><path d="M780.0 600.0 L790.0 610.0 L802.5 616.2 L803.8 625.0 L798.8 633.8 L787.5 647.5 L782.5 675.0"/><path d="M939.0 687.0 L1009.5 685.8"/><path d="M939.0 687.0 L935.0 694.8"/><path d="M780.0 692.5 L795.0 690.0 L800.0 694.8"/><path d="M458.9 695.0 L460.1 745.1 L461.4 790.1"/><path d="M370.0 775.1 L405.1 775.6 L425.1 785.1 L438.9 790.1 L461.4 790.1 L476.4 789.6 L476.4 762.6 L482.7 758.8 L495.2 763.8 L510.2 767.6 L530.2 762.6 L540.2 765.1 L577.7 763.1 L606.5 762.1"/><path d="M476.4 787.1 L530.2 785.1 L579.0 783.8 L600.3 783.1"/><path d="M575.2 695.0 L577.7 763.1 L579.0 783.8 L579.7 818.9 L577.7 857.7 L575.2 895.2 L580.3 907.7 L589.0 921.5"/><path d="M605.3 695.0 L606.5 762.1"/><path d="M530.2 785.1 L531.5 812.6 L579.7 814.6"/><path d="M579.7 818.9 L520.2 835.1 L523.9 845.2 L516.4 867.7 L514.7 921.5"/><path d="M600.3 783.1 L599.0 797.6 L595.3 845.2 L592.8 888.9 L590.3 921.5"/><path d="M600.3 783.1 L617.8 767.6 L637.8 747.6 L652.8 743.8 L679.1 740.0"/><path d="M606.5 716.3 L655.3 713.0 L670.3 695.0"/><path d="M655.3 713.0 L679.1 740.0 L700.4 727.5 L712.9 712.5 L726.6 701.3 L742.9 695.0"/><path d="M705.4 695.0 L715.4 698.8 L726.6 701.3"/><path d="M726.6 701.3 L740.4 720.0 L760.4 727.5 L770.4 740.0 L783.0 750.1 L785.5 762.6 L777.9 775.1 L780.5 781.3 L790.5 781.3 L800.5 787.6 L810.0 790.1"/><path d="M679.1 740.0 L674.1 746.3 L677.8 751.3 L685.4 753.1 L690.4 745.1 L697.9 740.0 L710.4 741.3 L720.4 741.3 L730.4 747.6 L731.7 755.1 L725.4 765.1 L715.4 772.6 L705.4 776.3 L690.4 775.1 L675.3 774.6 L665.3 767.6 L655.3 770.1 L656.6 760.1 L665.3 752.6 L677.8 751.3"/><path d="M599.0 797.6 L639.1 799.6 L647.8 811.4 L644.1 823.9 L632.8 821.4 L625.3 835.1"/><path d="M599.0 815.1 L617.8 826.4 L625.3 837.6 L637.8 850.2 L662.8 863.9 L720.4 878.9 L767.9 880.7"/><path d="M639.1 799.6 L646.6 790.1 L647.8 780.1 L656.6 776.3 L656.6 770.1"/><path d="M647.8 811.4 L655.3 820.1 L665.3 823.9 L680.4 818.9 L684.1 807.6 L680.4 792.6 L665.3 770.1"/><path d="M675.3 774.6 L680.4 792.6"/><path d="M725.4 765.1 L727.9 782.6 L736.7 793.8 L737.4 796.4"/><path d="M674.1 820.1 L720.4 813.1 L721.6 796.4 L788.0 795.9 L788.5 780.1"/><path d="M674.1 820.1 L672.8 863.9"/><path d="M720.9 813.1 L720.9 878.9"/><path d="M592.8 888.9 L664.1 890.2 L664.1 865.2"/><path d="M664.1 890.2 L662.8 919.0"/><path d="M590.3 919.0 L655.3 919.0 L707.9 919.5 L730.4 935.2"/><path d="M767.9 880.7 L780.5 845.2 L793.0 832.6 L810.0 820.1"/><path d="M767.9 880.7 L755.4 901.5 L742.9 921.5"/><path d="M755.4 901.5 L770.4 910.2 L790.5 931.5"/><path d="M810.0 902.7 L790.5 931.5"/><path d="M800.5 695.0 L803.0 705.0 L810.0 712.5"/><path d="M810.0 756.3 L803.0 760.1 L801.7 770.1 L803.0 785.1 L810.0 788.8"/><path d="M810.0 713.8 L820.0 722.5 L828.8 735.0 L825.0 750.1 L820.0 760.1 L810.0 758.8"/><path d="M828.8 735.0 L907.6 732.5"/><path d="M917.6 695.0 L907.6 732.5 L900.1 757.6 L892.6 772.6 L875.1 790.1 L832.5 815.1 L810.0 823.9"/><path d="M935.1 695.0 L910.1 742.5 L932.6 753.1 L943.9 733.0 L965.2 730.5 L1010.2 732.0"/><path d="M810.0 791.3 L852.5 802.1"/><path d="M832.5 815.1 L860.1 810.6 L890.1 817.1 L945.1 814.6 L965.2 808.9 L1010.2 788.8 L1035.2 775.1 L1056.5 753.1 L1102.3 787.1 L1080.3 817.6 L1084.0 825.1 L1082.3 836.4 L1069.0 833.9 L1056.5 857.7 L1035.2 845.2"/><path d="M1025.2 701.3 L1022.7 715.0 L1010.2 732.0 L1003.9 750.1 L1005.2 770.1 L1010.2 788.8 L1022.7 815.1 L1035.2 845.2 L1044.0 878.9 L1054.0 912.7 L1057.7 921.5"/><path d="M873.8 813.9 L847.5 842.6 L810.0 902.7"/><path d="M945.1 814.6 L942.6 838.9 L903.8 838.9 L926.4 914.0 L1044.0 878.9 L1080.3 891.4 L1120.3 921.5"/><path d="M1135.3 701.3 L1132.8 722.5 L1124.8 748.8 L1155.3 772.6 L1160.4 790.1 L1170.4 807.6 L1185.4 815.1 L1184.1 825.1 L1160.4 832.6 L1159.1 836.4 L1192.9 862.7 L1167.9 896.5"/><path d="M926.4 914.0 L917.6 921.5"/><path d="M1180.0 813.8 L1185.0 816.2 L1182.5 827.5 L1180.0 828.8"/><path d="M1180.0 852.5 L1192.5 862.5 L1180.0 878.8"/><path d="M514.7 910.0 L513.2 942.5 L570.2 947.5 L595.3 962.6 L599.0 992.6"/><path d="M589.0 910.0 L597.8 947.5 L599.0 970.1"/><path d="M655.3 910.0 L654.1 992.6"/><path d="M730.4 933.8 L707.9 920.0 L590.3 918.8"/><path d="M742.9 910.0 L730.4 933.8 L810.0 945.0"/><path d="M790.5 933.8 L755.4 972.6 L705.4 996.3"/><path d="M767.9 910.0 L790.5 933.8 L810.0 910.0"/><path d="M920.5 915.5 L887.4 1001.2"/><path d="M810.0 945.9 L837.6 962.5 L884.6 969.4"/><path d="M1053.2 910.0 L1064.2 951.4 L1080.8 1003.9"/><path d="M1102.9 910.0 L1166.5 954.2 L1167.8 1001.2"/></g><rect x="640" y="261" width="240" height="649" fill="#85b4c6"/><g fill="none" stroke="#5c728e" stroke-width="1.7"><path d="M761.4 390.0 L763.9 405.0"/><path d="M727.0 465.1 L723.8 445.1 L760.1 439.8"/><path d="M765.1 446.3 L814.5 440.1 L880.0 430.7"/><path d="M870.9 432.5 L872.7 455.1 L877.7 490.1 L880.0 520.0"/><path d="M828.9 517.6 L880.0 515.1"/><path d="M770.8 318.2 L871.5 304.4"/><path d="M752.0 337.0 L755.7 363.9 L763.2 363.2"/><path d="M765.1 380.1 L761.4 385.1 L760.7 390.0"/><path d="M770.1 332.6 L770.8 318.8"/><path d="M673.8 579.4 L674.4 564.4 L695.1 557.5"/><path d="M711.3 560.0 L713.8 555.0 L721.3 553.2 L722.0 570.1 L718.2 570.7 L717.0 565.0 L712.6 561.9 L711.3 560.0"/><path d="M726.3 553.2 L732.6 586.3 L733.2 598.2 L728.8 600.1"/><path d="M765.1 570.1 L777.6 556.9 L785.8 556.3"/><path d="M732.0 590.1 L751.4 589.4 L752.0 593.8 L757.0 593.2 L760.1 590.1 L759.5 587.6 L765.1 580.1"/><path d="M766.4 616.3 L775.1 609.5 L778.9 613.2 L787.6 608.2"/><path d="M717.0 615.1 L713.8 631.4 L725.1 637.6 L735.1 634.5 L742.6 633.9 L746.4 641.4 L745.7 650.0"/><path d="M745.7 650.0 L740.1 658.8 L737.6 673.8 L743.9 677.5 L745.1 683.8 L742.0 691.3 L744.5 693.2 L750.1 678.8 L754.5 670.6 L758.9 671.9 L763.9 676.3 L766.4 675.0"/><path d="M787.0 657.5 L788.3 673.8 L783.9 674.4"/><path d="M782.0 687.5 L785.1 681.3 L792.7 678.2 L815.2 678.8 L880.0 675.0"/><path d="M772.6 780.0 L774.5 773.9 L776.4 773.2"/><path d="M672.5 833.8 L665.0 835.7 L662.5 838.8 L656.3 839.4 L656.3 855.1 L658.8 867.6 L658.8 910.0"/><path d="M658.8 879.5 L646.3 884.5 L644.4 888.9"/><path d="M721.3 813.2 L773.3 813.2"/><path d="M773.3 796.9 L773.3 840.1 L787.6 831.9 L787.6 828.2 L795.2 826.9 L835.2 808.2 L880.0 787.5"/><path d="M764.5 794.4 L767.6 790.0 L782.6 789.4 L782.6 786.3 L777.6 785.0 L774.5 780.0"/></g><g fill="none" stroke="#070c14" stroke-width="1.45" stroke-linejoin="round"><path d="M687.5 390.0 L688.8 415.0 L690.1 473.8"/><path d="M688.8 415.0 L710.1 413.8 L771.4 406.3 L811.4 400.6 L880.0 390.0"/><path d="M768.9 390.0 L771.4 406.3"/><path d="M758.9 409.4 L763.2 438.2 L766.4 462.3 L714.4 470.1 L690.1 473.6 L650.0 479.5 L640.0 479.5"/><path d="M763.2 438.2 L814.5 431.3"/><path d="M811.4 400.6 L816.4 440.1 L822.1 480.1 L826.4 506.4 L827.7 520.0"/><path d="M816.4 440.4 L849.0 436.5 L852.1 456.1 L870.9 454.8 L871.5 448.2 L880.0 446.9"/><path d="M871.5 450.1 L874.6 473.2 L822.1 480.3 L718.2 495.4"/><path d="M714.4 470.1 L718.2 495.4 L722.0 520.0"/><path d="M775.1 520.0 L774.5 507.6 L824.6 500.7"/><path d="M826.4 506.4 L830.2 508.9 L832.7 515.1 L880.0 512.6"/><path d="M762.6 260.0 L763.2 263.8 L766.4 295.0 L770.1 332.6 L760.7 335.1 L660.6 355.1 L640.0 360.1"/><path d="M763.2 262.5 L783.3 278.8 L880.0 264.4"/><path d="M766.6 304.4 L880.0 287.8"/><path d="M760.7 335.1 L766.4 371.4 L768.9 390.0"/><path d="M660.6 355.1 L661.3 371.4 L686.3 371.4 L687.5 382.0 L766.4 371.4 L880.0 355.7"/><path d="M687.5 382.0 L687.5 390.0"/><path d="M640.0 388.9 L687.5 387.0"/><path d="M640.0 536.3 L688.8 535.0 L693.8 536.9 L698.8 537.5 L722.6 535.6 L721.3 520.0"/><path d="M693.8 536.9 L695.1 555.0 L756.4 546.3 L755.7 531.9 L777.0 528.5 L776.4 520.0"/><path d="M777.0 528.5 L778.9 538.8 L785.1 544.4 L797.7 545.0 L807.7 536.3 L815.2 533.8 L823.9 532.5 L827.7 530.6 L827.7 520.0"/><path d="M827.7 530.6 L833.7 531.3 L835.8 570.1 L880.0 528.8"/><path d="M785.1 544.4 L788.3 556.3 L781.4 563.8 L772.6 571.3 L763.9 572.6 L766.4 585.1 L728.8 587.6 L727.0 575.7 L707.6 584.4 L695.1 557.5 L695.1 555.0"/><path d="M695.1 557.5 L687.5 581.3 L655.6 581.9 L655.0 632.6 L658.8 642.6 L666.3 650.0"/><path d="M728.8 587.6 L728.8 600.1 L721.3 605.1 L717.0 613.2 L710.1 630.1 L705.1 640.1 L702.6 650.0"/><path d="M717.0 613.6 L765.8 612.3 L760.7 602.0 L763.9 596.6 L770.1 600.1 L775.1 600.7 L775.8 585.1 L785.1 583.8 L790.2 580.1 L805.2 579.4 L835.8 570.1"/><path d="M760.1 590.1 L768.9 592.6 L775.8 598.2 L781.4 602.0 L787.6 607.6 L790.2 613.2 L798.9 613.8 L803.3 618.8 L802.7 625.1 L798.3 633.9 L793.9 641.4 L787.6 650.0"/><path d="M798.3 634.1 L880.0 629.9"/><path d="M765.8 612.3 L762.0 615.1 L765.1 620.1 L770.8 619.5 L770.1 622.0 L762.0 623.9 L756.4 620.1 L755.1 623.9 L758.2 628.9 L757.0 635.1 L753.2 638.9 L755.1 645.1 L754.5 650.0"/><path d="M640.0 642.0 L657.5 640.7"/><path d="M877.1 531.9 L878.4 570.1 L880.0 585.1"/><path d="M665.0 650.0 L670.0 655.0 L673.8 663.8 L681.3 673.8 L685.7 681.3 L683.2 686.9"/><path d="M670.0 651.9 L681.3 651.3 L690.1 653.8 L697.6 655.3 L702.6 652.5 L703.8 650.0"/><path d="M683.2 686.9 L655.0 713.8 L640.0 714.4"/><path d="M683.2 686.9 L690.1 690.0 L702.6 693.2 L715.1 699.4 L727.6 700.7 L740.1 696.3 L752.6 691.9 L765.1 691.9 L777.6 688.8 L780.1 681.3 L783.9 665.0 L787.0 650.0"/><path d="M754.5 650.0 L748.9 657.5 L743.9 665.0 L743.2 672.5 L746.4 673.1 L750.1 665.6 L753.9 664.4 L762.6 668.1 L768.9 673.1 L771.4 678.8 L771.4 690.7"/><path d="M655.0 713.8 L668.8 723.8 L680.0 739.5"/><path d="M727.6 700.7 L717.6 708.8 L707.6 718.8 L701.3 728.8 L692.6 735.1 L680.0 739.5 L652.5 743.2 L640.0 747.0"/><path d="M727.6 700.7 L737.6 718.2 L742.6 722.6 L752.6 725.1 L760.1 727.6 L763.9 735.1 L771.4 740.1 L777.6 745.7 L783.9 748.8 L785.8 756.4 L785.1 765.1 L780.1 771.4 L776.4 780.0"/><path d="M773.9 691.9 L781.4 695.0 L790.2 691.9 L796.4 690.7 L800.2 693.8 L801.4 705.1 L806.4 711.3 L815.2 718.2 L823.9 726.3 L828.3 735.1 L828.9 742.6 L823.9 753.9 L820.2 759.5 L815.2 760.1 L806.4 757.6 L800.8 760.1 L800.2 765.1 L802.7 770.1 L802.7 780.0"/><path d="M828.3 735.5 L880.0 733.2"/><path d="M680.0 739.5 L675.7 745.1 L673.8 748.8 L676.3 751.4 L686.3 752.6 L689.4 746.3 L696.3 742.6 L703.8 739.5 L710.1 741.3 L717.6 742.0 L726.3 743.2 L731.3 750.1 L730.1 760.1 L726.3 765.1 L720.1 768.9 L712.6 773.9 L705.1 776.4 L695.1 775.8 L683.8 775.1 L675.7 773.9 L676.3 780.0"/><path d="M673.8 750.1 L665.0 751.4 L656.3 760.1 L655.6 767.6 L667.5 778.9"/><path d="M726.3 765.1 L725.1 770.1 L728.8 780.0"/><path d="M655.6 767.6 L657.5 776.4 L647.5 780.0"/><path d="M646.3 780.0 L647.5 787.5 L645.0 795.0 L640.0 798.8"/><path d="M640.0 800.6 L645.0 805.0 L648.8 811.3 L645.0 817.5 L644.4 823.8 L640.0 823.2"/><path d="M670.0 780.0 L677.5 787.5 L681.3 796.3 L684.4 806.3 L683.8 813.8 L678.8 819.4 L670.0 822.5 L662.5 824.4 L656.3 821.3 L652.5 816.3 L648.8 811.3"/><path d="M677.5 780.0 L678.8 787.5"/><path d="M678.8 819.4 L690.1 817.5 L705.1 814.4 L715.1 813.5 L721.3 814.0"/><path d="M678.8 819.4 L674.4 823.8 L673.2 842.6 L672.5 865.1"/><path d="M640.0 852.6 L663.8 865.1 L664.4 910.0"/><path d="M664.4 863.6 L672.5 865.3 L721.3 879.8 L768.3 881.1"/><path d="M721.3 795.6 L721.1 879.8"/><path d="M721.3 795.6 L737.0 795.6 L737.3 796.9 L787.6 796.3 L788.3 780.0"/><path d="M726.3 780.0 L727.6 785.0 L735.1 790.6 L737.0 795.6"/><path d="M768.3 881.1 L771.4 870.1 L775.1 855.1 L781.4 842.6 L788.9 832.6 L815.2 821.9 L832.7 814.4 L852.7 802.5 L871.5 791.3 L880.0 785.0"/><path d="M768.3 881.1 L756.4 898.9 L748.9 910.0"/><path d="M756.4 899.5 L763.9 903.9 L769.5 910.0"/><path d="M791.4 780.0 L796.4 787.5 L801.4 788.8 L801.4 785.6 L808.9 789.4 L852.7 801.9"/><path d="M832.7 814.4 L846.5 810.7 L859.0 810.0 L872.7 813.2 L880.0 815.0"/><path d="M872.7 813.8 L845.2 850.1 L806.4 910.0"/><path d="M640.0 890.4 L664.4 890.4"/><path d="M776.4 780.0 L780.1 781.9 L785.1 781.3 L787.0 780.0"/></g><g fill="none" stroke="#0e1520" stroke-width="1.2"><path d="M1287.7 931.3 L1312.7 949.4 L1311.5 950.7 L1286.4 933.2"/><path d="M1280.2 943.8 L1302.7 962.0 L1301.5 963.2 L1277.7 945.1"/><path d="M1275.2 945.1 L1268.9 952.6 L1295.2 973.8"/></g><g fill="#d8d8d8" stroke="#0e1520" stroke-width="1"><path d="M766.3 218.2 L796.9 218.2 L797.6 222.5 L766.9 226.9 Z"/></g><path d="M771.3 216.3 L782.5 213.8 L790.1 208.8 L802.6 206.3" fill="none" stroke="#0e1520" stroke-width="1.6" stroke-dasharray="3 1.5"/><path d="M777.5 221.3 L790.1 217.5 L806.3 212.5" fill="none" stroke="#0e1520" stroke-width="1.6" stroke-dasharray="2 2"/><path d="M841.4 212.5 L853.2 211.3 L851.4 208.5 L840.1 208.8 L840.1 210.7 L841.4 210.7 Z" fill="#d8d8d8" stroke="#0e1520" stroke-width="1"/><path d="M852.0 218.8 L858.2 218.8 L858.2 225.7 L852.0 225.7 Z" fill="#d8d8d8" stroke="#0e1520" stroke-width="1"/><path d="M987.6 190.0 L995.7 201.3 M1003.2 186.9 L1006.4 201.9 M1006.4 186.3 L1010.1 201.3 M1010.1 185.6 L1013.9 200.7" fill="none" stroke="#0e1520" stroke-width="2.2" stroke-dasharray="1.5 1.2"/><path d="M945.1 206.3 L946.4 225.1 L950.1 250.1 L953.9 275.1 L963.9 276.4 L966.4 300.1 L970.2 325.2 L973.9 347.7 L985.2 347.7 L986.4 361.4 L967.7 367.7 L971.4 402.7 L888.8 414.0 L885.1 395.2 L878.8 350.2 L873.8 305.1 L913.9 297.6 L911.4 282.6 L906.3 250.1 L903.8 220.0 M 913.35 187.06 A 15.5 15.5 0 1 0 924.7 211.4 L 931 204.5 L 934.5 200.5 M 936 206.3 L 945.1 206.3 M 903.8 220 L 901 214 M921.3 191.3 L935.1 201.9" fill="none" stroke="#0a0a0a" stroke-width="3.4" stroke-linejoin="round"/><path d="M945.1 206.3 L946.4 225.1 L950.1 250.1 L953.9 275.1 L963.9 276.4 L966.4 300.1 L970.2 325.2 L973.9 347.7 L985.2 347.7 L986.4 361.4 L967.7 367.7 L971.4 402.7 L888.8 414.0 L885.1 395.2 L878.8 350.2 L873.8 305.1 L913.9 297.6 L911.4 282.6 L906.3 250.1 L903.8 220.0 M 913.35 187.06 A 15.5 15.5 0 1 0 924.7 211.4 L 931 204.5 L 934.5 200.5 M 936 206.3 L 945.1 206.3 M 903.8 220 L 901 214 M921.3 191.3 L935.1 201.9" fill="none" stroke="#f4f4f4" stroke-width="1.3" stroke-dasharray="3.2 2.6"/></g></svg>
<div class="t " style="left:625px;top:423.5px;transform-origin:left center;transform:translateY(-50%) scaleX(0.945);font-size:12.8px;color:rgba(100,146,170,0.5)">Window Snip</div>
<svg style="left:15px;top:915px" width="90" height="80"><g fill="none" stroke="#1a1a1a" stroke-width="1"><path d="M9.500 22 V71.500 H59"/><rect x="5.500" y="67.500" width="8" height="8"/></g><text x="17" y="17.500" text-anchor="middle" font-family="DejaVu Sans, Liberation Sans, sans-serif" font-weight="200" font-size="18" fill="#1a1a1a">Y</text><text x="69.500" y="70.500" text-anchor="middle" font-family="DejaVu Sans, Liberation Sans, sans-serif" font-weight="200" font-size="19" fill="#1a1a1a">X</text></svg>
<svg style="left:1590px;top:184px" width="62" height="18"><g fill="#fff" stroke="#333" stroke-width="1.1"><rect x="5.500" y="9.700" width="11" height="3.600"/><rect x="28" y="2.800" width="9" height="9"/><rect x="25.800" y="5" width="9.500" height="9.300"/><rect x="28.800" y="8" width="3.600" height="3.600" fill="#888"/><path d="M46.500 3.500 h3 l2 2.800 l2 -2.800 h3 l-3.500 5 l3.500 5 h-3 l-2 -2.800 l-2 2.800 h-3 l3.500 -5z"/></g></svg>
<div class="a" style="left:1657px;top:177px;width:259px;height:830px;background:#3b4453"></div>
<div class="a" style="left:1659px;top:322px;width:21px;height:364px;background:#2f3646;border-radius:3px 0 0 3px"></div>
<div class="a" style="left:1659px;top:441px;width:21px;height:1px;background:#3b4453"></div>
<div class="a" style="left:1659px;top:563px;width:21px;height:1px;background:#3b4453"></div>
<div class="a" style="left:1680px;top:201px;width:1px;height:121px;background:#3b4453"></div>
<div class="a" style="left:1680px;top:322px;width:1.500px;height:685px;background:#4a5364"></div>
<div class="t" style="left:1670.5px;top:262px;transform:translate(-50%,-50%) rotate(-90deg) scaleX(0.945);font-size:12.3px;color:#dfe3ea">Display Manager</div>
<div class="t" style="left:1670.5px;top:383px;transform:translate(-50%,-50%) rotate(-90deg) scaleX(0.945);font-size:12.3px;color:#dfe3ea">Map Explorer</div>
<div class="t" style="left:1670.5px;top:504px;transform:translate(-50%,-50%) rotate(-90deg) scaleX(0.945);font-size:12.3px;color:#dfe3ea">Map Book</div>
<div class="t" style="left:1670.5px;top:625px;transform:translate(-50%,-50%) rotate(-90deg) scaleX(0.945);font-size:12.3px;color:#dfe3ea">Survey</div>
<div class="a" style="left:1680px;top:180px;width:234px;height:18.5px;background:#2f3746;border-radius:3px 0 0 0"></div>
<svg style="left:1685px;top:184px" width="5" height="10"><g fill="#dfe3ea"><rect x="0" y="0" width="1.300" height="1.300"/><rect x="2.500" y="0" width="1.300" height="1.300"/><rect x="0" y="2.500" width="1.300" height="1.300"/><rect x="2.500" y="2.500" width="1.300" height="1.300"/><rect x="0" y="5" width="1.300" height="1.300"/><rect x="2.500" y="5" width="1.300" height="1.300"/><rect x="0" y="7.500" width="1.300" height="1.300"/><rect x="2.500" y="7.500" width="1.300" height="1.300"/></g></svg>
<div class="t " style="left:1695px;top:188px;transform-origin:left center;transform:translateY(-50%) scaleX(0.945);font-size:12.3px;color:#eef0f3">TASK PANE</div>
<div class="a" style="left:1914px;top:177px;width:2.5px;height:830px;background:#222933"></div>
<div class="t " style="left:1693px;top:216px;transform-origin:left center;transform:translateY(-50%) scaleX(0.945);font-size:12.3px;color:#eef0f3">Display Map:</div>
<div class="a" style="left:1764px;top:207px;width:137px;height:18px;background:#4a5467;border:1px solid #2c3340"></div>
<div class="t " style="left:1768px;top:216px;transform-origin:left center;transform:translateY(-50%) scaleX(0.945);font-size:12.3px;color:#eef0f3">Default</div>
<svg style="left:1889px;top:214px" width="9" height="6"><path d="M0 0.500 h9 l-4.500 4.500z" fill="#eef0f3"/></svg>
<div class="a" style="left:1691px;top:235px;width:212px;height:54px;border:1px solid #2f3745;background:#3b4453"></div>
<svg style="left:0;top:0" width="1918" height="300"><g fill="#e4e4e4" stroke="#9a9a9a" stroke-width="0.600"><ellipse cx="1708.500" cy="252" rx="10" ry="4.500"/><path d="M1698.500 254 q10 7 20 0 v5 q-10 7 -20 0z"/><path d="M1698.500 261 q10 7 20 0 v4 q-10 7 -20 0z"/></g><path d="M1749 250 l-9 10" stroke="#8d8672" stroke-width="1.600"/><path d="M1741 258 q-6 1 -8 8 q7 1 11 -5z" fill="#8a6f52"/><g fill="none" stroke="#808997" stroke-width="1.200"><rect x="1761.500" y="246.500" width="21.500" height="22"/><path d="M1761.500 250.500 h21.500 M1761.500 255 h21.500 M1761.500 259.500 h21.500 M1761.500 264 h21.500 M1767 250.500 v18 M1772.300 250.500 v18 M1777.600 250.500 v18"/></g><g stroke="#e6e6e6" stroke-width="3" stroke-linecap="round"><path d="M1798 250 l14 15"/></g><path d="M1794 249 a4 4 0 1 0 6 -3" fill="none" stroke="#e6e6e6" stroke-width="2.200"/><path d="M1799 264 l11 -12" stroke="#e8a060" stroke-width="3"/><path d="M1806 248 l6 -2 l4 4 l-4 4z" fill="#e6e6e6"/><path d="M1831 245 h13 l7 7 v17 h-20z" fill="#fbe9dc"/><path d="M1844 245 v7 h7z" fill="#ededed" stroke="#bbb" stroke-width="0.500"/><path d="M1831 257.500 q6 1.500 10 1.500 q1 5 -1 10 h-9z" fill="#cfe6f4"/><path d="M1841 259 q5 0 10 -2 v12 h-11 q2 -5 1 -10z" fill="#c4f0cc"/><path d="M1831 257 q8 2.500 20 0 M1841 259 q1 5 -1 10" fill="none" stroke="#e0706a" stroke-width="1"/></svg>
<div class="t " style="left:1698px;top:279px;transform-origin:left center;transform:translateY(-50%) scaleX(0.945);font-size:11.500px;color:#eef0f3">Data</div>
<div class="t " style="left:1729px;top:279px;transform-origin:left center;transform:translateY(-50%) scaleX(0.945);font-size:11.500px;color:#7f8897">Style</div>
<div class="t " style="left:1760px;top:279px;transform-origin:left center;transform:translateY(-50%) scaleX(0.945);font-size:11.500px;color:#7f8897">Table</div>
<div class="t " style="left:1794px;top:279px;transform-origin:left center;transform:translateY(-50%) scaleX(0.945);font-size:11.500px;color:#eef0f3">Tools</div>
<div class="t " style="left:1828px;top:279px;transform-origin:left center;transform:translateY(-50%) scaleX(0.945);font-size:11.500px;color:#eef0f3">Maps</div>
<div class="a" style="left:1691px;top:300px;width:63px;height:28px;background:#222933"></div>
<svg style="left:1692px;top:305px" width="20" height="18"><g fill="none" stroke="#e6e6e6" stroke-width="1.200"><path d="M4 1.500 h-2.500 v15 h2.500 M14 1.500 h2.500 v15 h-2.500"/></g><g fill="#e6e6e6" stroke="#222933" stroke-width="0.600"><path d="M4 9 l4 -5 h8 l-4 5z"/><path d="M4 11.500 l4 -5 h8 l-4 5z"/><path d="M4 14 l4 -5 h8 l-4 5z"/></g></svg>
<div class="t " style="left:1716px;top:316px;transform-origin:left center;transform:translateY(-50%) scaleX(0.945);font-size:11.500px;color:#eef0f3">Groups</div>
<div class="a" style="left:1762px;top:302px;width:1px;height:24px;background:#5a6374"></div>
<svg style="left:1771px;top:306px" width="20" height="18"><g fill="#e6e6e6" stroke="#3b4453" stroke-width="0.600"><path d="M2 5 l3 -3.500 h9 l-3 3.500z"/><path d="M2 8 l3 -3.500 h9 l-3 3.500z"/><path d="M2 11 l3 -3.500 h9 l-3 3.500z"/><rect x="9" y="7.500" width="7" height="9"/><rect x="10.300" y="9" width="4.400" height="2.600" fill="#6ec8f0" stroke="none"/></g><path d="M10.500 10 h4 M14 13.500 h-3 l1.500 -1.500" stroke="#3b4453" stroke-width="1" fill="none"/></svg>
<div class="t " style="left:1795px;top:316px;transform-origin:left center;transform:translateY(-50%) scaleX(0.945);font-size:11.500px;color:#eef0f3">Draw Order</div>
<div class="a" style="left:1691px;top:335px;width:212px;height:656px;border:1px solid #8a93a0;background:#3b4453"></div>
<div class="a" style="left:1696px;top:340px;width:202px;height:645px;background:#f5f5f5"></div>
<div class="a" style="left:1729px;top:347px;width:14px;height:14px;background:#fff;border:1px solid #6a6a6a"></div><svg style="left:1729px;top:347px" width="14" height="14"><path d="M3.200 7 l2.800 3 l5 -6" fill="none" stroke="#555" stroke-width="1.500"/></svg>
<div class="a" style="left:1757px;top:344px;width:53px;height:16px;background:#7ea6dc;border:1px solid #222"></div>
<div class="a" style="left:1824px;top:346px;width:74px;height:16px;overflow:hidden"><div class="t" style="left:0;top:1px;font-size:12px;color:#1a1a1a;transform-origin:left;transform:scaleX(0.97)">realtor_neighborhoods</div></div>
<div class="a" style="left:1729px;top:376px;width:14px;height:14px;background:#fff;border:1px solid #6a6a6a"></div><svg style="left:1729px;top:376px" width="14" height="14"><path d="M3.200 7 l2.800 3 l5 -6" fill="none" stroke="#555" stroke-width="1.500"/></svg>
<div class="a" style="left:1757px;top:373px;width:53px;height:16px;background:#00a651;border:1px solid #222"></div>
<div class="t " style="left:1824px;top:382px;transform-origin:left center;transform:translateY(-50%) scaleX(0.97);font-size:12px;color:#1a1a1a">sfzipcodes</div>
<svg style="left:1706px;top:406px" width="14" height="12"><path d="M1.500 2 l5.500 6 l5.500 -6" fill="none" stroke="#555" stroke-width="2.200"/></svg>
<div class="a" style="left:1729px;top:405px;width:14px;height:14px;background:#fff;border:1px solid #6a6a6a"></div><svg style="left:1729px;top:405px" width="14" height="14"><path d="M3.200 7 l2.800 3 l5 -6" fill="none" stroke="#555" stroke-width="1.500"/></svg>
<div class="a" style="left:1748px;top:404px;width:48px;height:16px;background:#fff"></div>
<div class="t " style="left:1807px;top:412.5px;transform-origin:left center;transform:translateY(-50%) scaleX(0.97);font-size:12px;color:#1a1a1a;font-style:italic">Map Base</div>
<div class="a" style="left:1751px;top:432px;width:14px;height:14px;background:#fff;border:1px solid #6a6a6a"></div>
<div class="a" style="left:1770px;top:431px;width:48px;height:16px;background:#fff"></div><div class="a" style="left:1773px;top:439px;width:42px;height:1px;background:#c8c8c8"></div>
<div class="t " style="left:1829px;top:439px;transform-origin:left center;transform:translateY(-50%) scaleX(0.97);font-size:12px;color:#1a1a1a">Default</div>
<div class="a" style="left:1696px;top:969px;width:202px;height:16px;background:#f0f0f0"></div>
<div class="a" style="left:1713px;top:969px;width:138px;height:15px;background:#cdcdcd"></div>
<svg style="left:1696px;top:969px" width="202" height="16"><path d="M9.500 4 l-4 4 l4 4 M192.500 4 l4 4 l-4 4" fill="none" stroke="#505050" stroke-width="1.800"/></svg>
<div class="a" style="left:2px;top:1007px;width:1914px;height:31px;background:#222933"></div>
<svg style="left:0;top:1006px" width="240" height="22"><path d="M14 0 h60 l-5 15 q-2 5 -7 5 h-37 q-5 0 -6.500 -5z" fill="#3b4453"/><path d="M76 1 h59 l-5 14 q-2 5 -7 5 h-37 q-5 0 -6.500 -5z" fill="#2f3746"/><path d="M139 1 h61 l-5 14 q-2 5 -7 5 h-39 q-5 0 -6.500 -5z" fill="#2f3746"/><path d="M205 1 h26 l-4 12 q-1.500 4 -5 4 h-9 q-4 0 -5 -4z" fill="#2f3746"/><path d="M214.500 9.500 h8 M218.500 5.500 v8" stroke="#c8ccd4" stroke-width="1.700"/></svg>
<div class="t " style="left:27px;top:1016px;transform-origin:left center;transform:translateY(-50%) scaleX(0.945);font-size:12.3px;font-weight:bold;color:#ffffff">Model</div>
<div class="t " style="left:85px;top:1016px;transform-origin:left center;transform:translateY(-50%) scaleX(0.945);font-size:12.3px;color:#d8dce3">Layout1</div>
<div class="t " style="left:150px;top:1016px;transform-origin:left center;transform:translateY(-50%) scaleX(0.945);font-size:12.3px;color:#d8dce3">Layout2</div>
<div class="a" style="left:1094.5px;top:1009.500px;width:22.5px;height:23.500px;background:#5a95d6"></div>
<div class="a" style="left:1121.5px;top:1009.500px;width:47px;height:23.500px;background:#313947"></div>
<div class="a" style="left:1121.5px;top:1009.500px;width:22.5px;height:23.500px;background:#5a7396"></div>
<div class="a" style="left:1172px;top:1009.500px;width:53.5px;height:23.500px;background:#313947"></div>
<div class="a" style="left:1229px;top:1009.500px;width:87px;height:23.500px;background:#313947"></div>
<div class="a" style="left:1318.7px;top:1009.500px;width:100.3px;height:23.500px;background:#313947"></div>
<div class="a" style="left:1419px;top:1009.500px;width:22px;height:23.500px;background:#5a95d6"></div>
<div class="a" style="left:1444.6px;top:1009.500px;width:47px;height:23.500px;background:#313947"></div>
<div class="a" style="left:1496px;top:1009.500px;width:62.4px;height:23.500px;background:#313947"></div>
<div class="a" style="left:1562px;top:1009.500px;width:103px;height:23.500px;background:#313947"></div>
<div class="a" style="left:1586.7px;top:1009.500px;width:22.3px;height:23.500px;background:#5a95d6"></div>
<div class="a" style="left:1667.8px;top:1009.500px;width:22.2px;height:23.500px;background:#5a95d6"></div>
<div class="a" style="left:1691.8px;top:1009.500px;width:22.2px;height:23.500px;background:#5a95d6"></div>
<div class="a" style="left:1714px;top:1009.500px;width:16.5px;height:23.500px;background:#313947"></div>
<div class="a" style="left:1734px;top:1009.500px;width:23px;height:23.500px;background:#5a95d6"></div>
<div class="a" style="left:1761px;top:1009.500px;width:40px;height:23.500px;background:#313947"></div>
<div class="a" style="left:1804px;top:1009.500px;width:24px;height:23.500px;background:#313947"></div>
<div class="a" style="left:1830.8px;top:1009.500px;width:28.8px;height:23.500px;background:#313947"></div>
<div class="a" style="left:1863.5px;top:1009.500px;width:48.4px;height:23.500px;background:#313947"></div>
<svg style="left:0;top:0" width="1918" height="1040"><g transform="translate(0 1009)"><path d="M1098 9 h6 v-3 l5 4.500 l-5 4.500 v-3 h-6z" fill="#e8e8e8"/><path d="M1113 15 h-5 v-2.500 l-4 3.500 l4 3.500 v-2.500 h5z" fill="#e8e8e8"/><g fill="none" stroke="#e8e8e8" stroke-width="1.200"><path d="M1125.500 5 v14.500 h14"/><path d="M1123.500 7 l2 -2.500 l2 2.500 M1137.500 17.500 l2.500 2 l-2.500 2"/></g><g fill="none" stroke="#e8e8e8" stroke-width="1.200"><path d="M1149.500 5 v14.500 h14 M1150 19 l9 -9"/><path d="M1147.500 7 l2 -2.500 l2 2.500 M1161.500 17.500 l2.500 2 l-2.500 2 M1155.500 10 h3.500 v3.500"/></g><g fill="none" stroke="#e8e8e8" stroke-width="1.300"><path d="M1183 5.500 l-7 14 h14z"/><path d="M1183 10 v5 M1183 16.500 v1.500"/></g><g fill="none" stroke="#e8e8e8" stroke-width="1.200"><circle cx="1241" cy="12.500" r="7"/><path d="M1237 7 q3 3 1 6 q-2 2 0 5 M1243 6 q-1 3 2 4 q3 1 1 5 M1234.500 11 q3 1 4 -1"/></g><g fill="none" stroke="#e8e8e8" stroke-width="1.200"><path d="M1326 5 h6 l3 3 v11 h-9z M1330 9 h6 l0 12 h-8 v-3"/><path d="M1328 12 h4 M1328 15 h4"/></g><rect x="1425" y="11" width="10" height="8" fill="#e8e8e8"/><path d="M1427 11 v-3 a3 3 0 0 1 6 0 v3" fill="none" stroke="#e8e8e8" stroke-width="1.600"/><g stroke="#e8e8e8" stroke-width="1.200"><path d="M1500 8.500 h14 M1500 12.500 h14 M1500 16.500 h14 M1503 5.500 v14 M1507 5.500 v14 M1511 5.500 v14"/></g><g fill="#e8e8e8"><rect x="1525.0" y="6.5" width="1.800" height="1.800"/><rect x="1525.0" y="11.0" width="1.800" height="1.800"/><rect x="1525.0" y="15.5" width="1.800" height="1.800"/><rect x="1529.5" y="6.5" width="1.800" height="1.800"/><rect x="1529.5" y="11.0" width="1.800" height="1.800"/><rect x="1529.5" y="15.5" width="1.800" height="1.800"/><rect x="1534.0" y="6.5" width="1.800" height="1.800"/><rect x="1534.0" y="11.0" width="1.800" height="1.800"/><rect x="1534.0" y="15.5" width="1.800" height="1.800"/></g><path d="M1566.500 5 v14.500 h13 M1566.500 14 h5 v5.500" fill="none" stroke="#e8e8e8" stroke-width="1.300"/><g fill="none" stroke="#e8e8e8" stroke-width="1.300"><circle cx="1596.500" cy="13" r="6"/><path d="M1590 18.500 h13 M1596.500 13 l6 -6.500"/></g><path d="M1630 5 l10 15" stroke="#e05050" stroke-width="1.200"/><path d="M1636 4 v17" stroke="#50c878" stroke-width="1.200"/><circle cx="1636" cy="12.500" r="1.500" fill="#e8e8e8"/><path d="M1672 19.500 h14 M1672 19.500 l11 -11 M1678 13.500 v6" fill="none" stroke="#e8e8e8" stroke-width="1.300"/><g fill="none" stroke="#e8e8e8" stroke-width="1.300"><rect x="1697.500" y="8.500" width="11" height="11"/><rect x="1695.500" y="5.500" width="3.500" height="3.500" fill="#5a95d6"/></g><path d="M1745 4 l2 9 l5.500 7 l-6 -3 l-1.500 3.500 l-1.500 -3.500 l-6 3 l5.500 -7z" fill="#e8e8e8"/><circle cx="1751.500" cy="7" r="2" fill="none" stroke="#e8e8e8" stroke-width="1.200"/><g fill="#e8e8e8"><circle cx="1773" cy="12.500" r="5"/><rect x="1771.700" y="5" width="2.600" height="15" rx="0.500" transform="rotate(0 1773 12.500)"/><rect x="1771.700" y="5" width="2.600" height="15" rx="0.500" transform="rotate(45 1773 12.500)"/><rect x="1771.700" y="5" width="2.600" height="15" rx="0.500" transform="rotate(90 1773 12.500)"/><rect x="1771.700" y="5" width="2.600" height="15" rx="0.500" transform="rotate(135 1773 12.500)"/></g><circle cx="1773" cy="12.500" r="2.200" fill="#313947"/><g fill="none" stroke="#e8e8e8" stroke-width="1.100"><rect x="1808.500" y="6.500" width="5.500" height="5.500"/><circle cx="1821" cy="12" r="2.800"/><path d="M1814.500 14 l3 5.500 h-6z"/></g><path d="M1845.500 5 l8 15.500 h-16z" fill="#e8e8e8"/><path d="M1845.500 10 v6 M1845.500 17.500 v1.500" stroke="#313947" stroke-width="1.600"/><g fill="none" stroke="#e8e8e8" stroke-width="1.200"><rect x="1867.500" y="7.500" width="15" height="11"/><path d="M1879.500 10.500 l-3.500 3 M1879.500 10.500 h-2.500 M1879.500 10.500 v2.500 M1870.500 15.500 l3.500 -3 M1870.500 15.500 h2.500 M1870.500 15.500 v-2.500"/></g><g stroke="#e8e8e8" stroke-width="1.600"><path d="M1892 8 h16 M1892 13 h16 M1892 18 h16"/></g><path d="M1214.5 11 h7 l-3.500 4z" fill="#e8e8e8"/><path d="M1304.5 11 h7 l-3.500 4z" fill="#e8e8e8"/><path d="M1406.5 11 h7 l-3.500 4z" fill="#e8e8e8"/><path d="M1547.5 11 h7 l-3.500 4z" fill="#e8e8e8"/><path d="M1614.5 11 h7 l-3.500 4z" fill="#e8e8e8"/><path d="M1654.5 11 h7 l-3.500 4z" fill="#e8e8e8"/><path d="M1719.5 11 h7 l-3.500 4z" fill="#e8e8e8"/><path d="M1788.5 11 h7 l-3.500 4z" fill="#e8e8e8"/></g></svg>
<div class="t " style="left:1196px;top:1021px;transform-origin:left center;transform:translateY(-50%) scaleX(0.945);font-size:12.3px;color:#eef0f3">1x</div>
<div class="t " style="left:1253px;top:1021px;transform-origin:left center;transform:translateY(-50%) scaleX(0.945);font-size:12.3px;color:#eef0f3">CA83IIIF</div>
<div class="t " style="left:1343px;top:1021px;transform-origin:left center;transform:translateY(-50%) scaleX(0.945);font-size:12.3px;color:#eef0f3">1 : 52698.2</div>
<div class="t " style="left:1448px;top:1021px;transform-origin:left center;transform:translateY(-50%) scaleX(0.945);font-size:12.3px;color:#eef0f3">MODEL</div>
<div class="a" style="left:335px;top:921px;width:25px;height:85px;background:#5f6572;border-radius:3px 0 0 0"></div>
<svg style="left:335px;top:921px" width="25" height="85"><g fill="#e8e8e8"><rect x="4" y="5" width="1.600" height="1.600"/><rect x="4" y="8" width="1.600" height="1.600"/><rect x="7" y="5" width="1.600" height="1.600"/><rect x="7" y="8" width="1.600" height="1.600"/><rect x="10" y="5" width="1.600" height="1.600"/><rect x="10" y="8" width="1.600" height="1.600"/><rect x="13" y="5" width="1.600" height="1.600"/><rect x="13" y="8" width="1.600" height="1.600"/><rect x="16" y="5" width="1.600" height="1.600"/><rect x="16" y="8" width="1.600" height="1.600"/><rect x="19" y="5" width="1.600" height="1.600"/><rect x="19" y="8" width="1.600" height="1.600"/></g><path d="M7.500 17.500 l8 8 M15.500 17.500 l-8 8" stroke="#f0f0f0" stroke-width="1.800"/><path d="M4.500 52.500 l8 -8" stroke="#f0f0f0" stroke-width="2.400" stroke-linecap="round"/><path d="M17.500 40 a4 4 0 1 0 -1.500 6.500" fill="none" stroke="#f0f0f0" stroke-width="2.200"/></svg>
<div class="a" style="left:360px;top:921px;width:967px;height:48px;background:rgba(205,205,205,0.63);border-top:1px solid #30363f;border-right:1px solid #8a8f98"></div>
<div class="a" style="left:360px;top:969px;width:967px;height:37px;background:linear-gradient(100deg,rgba(250,252,253,0.93) 0%,rgba(246,249,251,0.88) 45%,rgba(240,246,249,0.78) 100%);border-top:1px solid #6a7078;border-right:1px solid #8a8f98"></div>
<div class="t mono" style="left:362px;top:938px;font-size:11.600px;color:#303030">Command: _MAPCGSETUP</div>
<div class="t mono" style="left:362px;top:953px;font-size:11.600px;color:#303030">Command: '_mapcogofunction</div>
<svg style="left:364px;top:973px" width="28" height="12"><rect x="0.500" y="0.500" width="14" height="10" fill="#f4f4f4" stroke="#777" stroke-width="1"/><rect x="0.500" y="0.500" width="14" height="2.500" fill="#888"/><path d="M3 5 l2.500 1.800 l-2.500 1.800 M7 8.800 h4" stroke="#444" stroke-width="1" fill="none"/><path d="M17.500 3 h7 l-3.500 4z" fill="#777"/></svg>
<div class="t mono" style="left:391px;top:973px;font-size:11.600px;color:#303030;color:#222">Select COGO operation [<span style="background:#d3d7db;border-radius:2px;padding:2px 0"><span style="color:#2a2fd0">L</span>ast</span> <span style="background:#d3d7db;border-radius:2px;padding:2px 0"><span style="color:#2a2fd0">A</span>ngle distance</span> <span style="background:#d3d7db;border-radius:2px;padding:2px 0">a<span style="color:#2a2fd0">Z</span>imuth distance</span> <span style="background:#d3d7db;border-radius:2px;padding:2px 0"><span style="color:#2a2fd0">B</span>earing bearing</span> <span style="background:#d3d7db;border-radius:2px;padding:2px 0">b<span style="color:#2a2fd0">E</span>aring distance</span> <span style="background:#d3d7db;border-radius:2px;padding:2px 0"><span style="color:#2a2fd0">D</span>eflection distance</span> <span style="background:#d3d7db;border-radius:2px;padding:2px 0">di<span style="color:#2a2fd0">S</span>tance distance</span></div>
<div class="t mono" style="left:363px;top:991px;font-size:11.600px;color:#303030;color:#222"><span style="background:#d3d7db;border-radius:2px;padding:2px 0"><span style="color:#2a2fd0">I</span>nverse report</span> <span style="background:#d3d7db;border-radius:2px;padding:2px 0"><span style="color:#2a2fd0">O</span>rthogonal offset</span>]&lt;Last&gt;: _Last</div>
<svg style="left:1315px;top:985px" width="9" height="6"><path d="M0.500 5 h8 l-4 -4.500z" fill="#8a8a8a"/></svg>
<div class="a" style="left:1010px;top:287px;width:413px;height:414px;background:#f0f0f0;box-shadow:0 0 0 1px #4a4a4a,0 4px 16px 1px rgba(0,0,0,0.42)"></div>
<div class="a" style="left:1010px;top:287px;width:413px;height:30px;background:#ffffff"></div><div class="a" style="left:1010px;top:287px;width:413px;height:414px;border:1px solid #fff"></div>
<svg style="left:1018px;top:294px" width="16" height="16" viewBox="0 0 16 16"><path d="M1 14.500 L6 1.500 L10.500 1.500 L15 14.500 L11.500 14.500 L10.500 11.500 L5.500 11.500 L4.500 14.500 Z M6.500 8.800 L9.800 8.800 L8.200 4 Z" fill="#d2232a" fill-rule="evenodd"/><path d="M6 1.500 L10.500 1.500 L15 14.500 L13 14.500 L8.500 3 Z" fill="#9e141b"/></svg>
<div class="t dlg" style="left:1039.5px;top:302px;transform-origin:left center;transform:translateY(-50%) scaleX(0.94);font-size:12.3px">COGO Input</div>
<svg style="left:1402px;top:296px" width="12" height="12"><path d="M1 1 l10 10 M11 1 l-10 10" stroke="#111" stroke-width="1.200"/></svg>
<div class="t dlg" style="left:1018.5px;top:333.5px;transform-origin:left center;transform:translateY(-50%) scaleX(1);">Routines:</div>
<div class="a" style="left:1019px;top:346px;width:129px;height:314px;background:#fff;border:1px solid #7a7a7a"></div>
<div class="a" style="left:1041px;top:349.500px;width:105px;height:17.500px;background:#0078d7"></div>
<div class="a" style="left:1021px;top:348px;width:125.500px;height:20px;border:1px dotted #333"></div>
<div class="t dlg" style="left:1043.5px;top:358px;transform-origin:left center;transform:translateY(-50%) scaleX(1);color:#fff;font-size:11px;text-shadow:0.400px 0 0 #fff;letter-spacing:-0.100px">Angle/Distance</div>
<div class="t dlg" style="left:1043.5px;top:378px;transform-origin:left center;transform:translateY(-50%) scaleX(1);color:#000;font-size:11px;text-shadow:0.400px 0 0 #000;letter-spacing:-0.100px">Azimuth/Distance</div>
<div class="t dlg" style="left:1043.5px;top:398px;transform-origin:left center;transform:translateY(-50%) scaleX(1);color:#000;font-size:11px;text-shadow:0.400px 0 0 #000;letter-spacing:-0.100px">Bearing/Bearing</div>
<div class="t dlg" style="left:1043.5px;top:418px;transform-origin:left center;transform:translateY(-50%) scaleX(1);color:#000;font-size:11px;text-shadow:0.400px 0 0 #000;letter-spacing:-0.100px">Bearing/Distance</div>
<div class="t dlg" style="left:1043.5px;top:438px;transform-origin:left center;transform:translateY(-50%) scaleX(1);color:#000;font-size:11px;text-shadow:0.400px 0 0 #000;letter-spacing:-0.100px">Deflection/Distance</div>
<div class="t dlg" style="left:1043.5px;top:458px;transform-origin:left center;transform:translateY(-50%) scaleX(1);color:#000;font-size:11px;text-shadow:0.400px 0 0 #000;letter-spacing:-0.100px">Distance/Distance</div>
<div class="t dlg" style="left:1043.5px;top:478px;transform-origin:left center;transform:translateY(-50%) scaleX(1);color:#000;font-size:11px;text-shadow:0.400px 0 0 #000;letter-spacing:-0.100px">Inverse Report</div>
<div class="t dlg" style="left:1043.5px;top:498px;transform-origin:left center;transform:translateY(-50%) scaleX(1);color:#000;font-size:11px;text-shadow:0.400px 0 0 #000;letter-spacing:-0.100px">Orthogonal/Offset</div>
<div class="a" style="left:1156px;top:332px;width:1px;height:327px;background:#a0a0a0"></div><div class="a" style="left:1157px;top:332px;width:1px;height:327px;background:#fff"></div>
<div class="a" style="left:1165px;top:332px;width:251px;height:210px;border:1px solid #dcdcdc"></div>
<div class="a" style="left:1171px;top:326px;width:31px;height:12px;background:#f0f0f0"></div>
<div class="t dlg" style="left:1173.5px;top:331.5px;transform-origin:left center;transform:translateY(-50%) scaleX(1);">Input</div>
<div class="t dlg" style="left:1173.5px;top:351.5px;transform-origin:left center;transform:translateY(-50%) scaleX(1);">Specify start point of line:</div>
<div class="t dlg" style="left:1173.5px;top:372.5px;transform-origin:left center;transform:translateY(-50%) scaleX(1);">X:</div>
<div class="t dlg" style="left:1279.5px;top:372.5px;transform-origin:left center;transform:translateY(-50%) scaleX(1);">Y:</div>
<div class="inp" style="left:1189px;top:362px;width:83px;height:23px"></div><div class="inp" style="left:1295px;top:362px;width:83px;height:23px"></div>
<div class="btn" style="left:1386px;top:363px;width:22px;height:21px"></div>
<div class="t dlg" style="left:1173.5px;top:399px;transform-origin:left center;transform:translateY(-50%) scaleX(1);">Specify end point of line:</div>
<div class="t dlg" style="left:1173.5px;top:421px;transform-origin:left center;transform:translateY(-50%) scaleX(1);">X:</div>
<div class="t dlg" style="left:1279.5px;top:421px;transform-origin:left center;transform:translateY(-50%) scaleX(1);">Y:</div>
<div class="inp" style="left:1189px;top:411px;width:83px;height:23px"></div><div class="inp" style="left:1295px;top:411px;width:83px;height:23px"></div>
<div class="t dlg" style="left:1173.5px;top:448.5px;transform-origin:left center;transform:translateY(-50%) scaleX(1);">Angle:</div>
<div class="inp" style="left:1174px;top:460px;width:66px;height:23px"></div>
<div class="btn" style="left:1248px;top:461px;width:22px;height:21px"></div>
<div class="t dlg" style="left:1173.5px;top:497px;transform-origin:left center;transform:translateY(-50%) scaleX(1);">Distance:</div>
<div class="inp" style="left:1174px;top:509px;width:66px;height:23px"></div>
<div class="btn" style="left:1248px;top:510px;width:22px;height:21px"></div>
<div class="t dlg" style="left:1279px;top:518.5px;transform-origin:left center;transform:translateY(-50%) scaleX(1);">US Feet</div>
<div class="btn" style="left:1340px;top:567px;width:69px;height:21px">Calculate</div>
<div class="a" style="left:1165px;top:594px;width:251px;height:65px;border:1px solid #dcdcdc"></div>
<div class="a" style="left:1171px;top:588px;width:36px;height:12px;background:#f0f0f0"></div>
<div class="t dlg" style="left:1173.5px;top:594px;transform-origin:left center;transform:translateY(-50%) scaleX(1);">Result</div>
<div class="t dlg" style="left:1173.5px;top:614.5px;transform-origin:left center;transform:translateY(-50%) scaleX(1);">Location:</div>
<div class="t dlg" style="left:1173.5px;top:636px;transform-origin:left center;transform:translateY(-50%) scaleX(1);">X:</div>
<div class="t dlg" style="left:1279.5px;top:636px;transform-origin:left center;transform:translateY(-50%) scaleX(1);">Y:</div>
<div class="inp" style="left:1189px;top:626px;width:83px;height:23px;background:#f0f0f0"></div><div class="inp" style="left:1295px;top:626px;width:83px;height:23px;background:#f0f0f0"></div>
<div class="btn" style="left:1386px;top:627px;width:22px;height:21px;background:#cfcfcf;border-color:#bfbfbf"></div>
<div class="btn" style="left:1176px;top:669px;width:69px;height:21px;background:#cccccc;border-color:#bfbfbf;color:#838383">Create Point</div>
<div class="btn" style="left:1259px;top:669px;width:69px;height:21px">Cancel</div>
<div class="btn" style="left:1341px;top:669px;width:69px;height:21px">Help</div>
<svg style="left:0;top:0" width="1918" height="1040"><g fill="none" stroke-width="1.300"><path d="M1025 364 v-13 h13" stroke="#222"/><path d="M1025 362 l12 -10" stroke="#222"/><path d="M1027 352 q3 6 10 6" stroke="#1a3a9a"/></g><g fill="none" stroke-width="1.300"><path d="M1028 371 v14" stroke="#1a3a9a" stroke-dasharray="2 1.500"/><path d="M1028 373 q8 2 4 9" stroke="#1a3a9a"/><path d="M1028 378 l7 8" stroke="#222"/></g><g fill="none" stroke-width="1.300"><path d="M1024 402 l6 -10 l8 14 M1030 392 l-6 0" stroke="#222"/><path d="M1024 392 v10 M1038 392 v12" stroke="#1a3a9a" stroke-dasharray="2 1.500"/><rect x="1036.500" y="404.500" width="2.500" height="2.500" stroke="#222"/><rect x="1022.500" y="401.500" width="2.500" height="2.500" stroke="#222"/></g><g fill="none" stroke-width="1.300"><path d="M1025 411 v14 h13" stroke="#1a3a9a" stroke-dasharray="2 1.500"/><path d="M1025 424 l12 -12" stroke="#222"/><path d="M1025 413 q5 0 8 4" stroke="#1a3a9a"/></g><g fill="none" stroke-width="1.400"><path d="M1026 446 v-15" stroke="#1a3a9a" stroke-dasharray="2 1.500"/><path d="M1026 444 l10 -12" stroke="#222"/><path d="M1026 432 q5 0 7 4" stroke="#1a3a9a"/></g><g fill="none" stroke-width="1.200"><path d="M1024 453 h10 M1036 456 v9" stroke="#1a3a9a" stroke-dasharray="2 1.500"/><path d="M1024 451 v4 M1034 451 v4 M1034 456 h4 M1034 466 h4" stroke="#222"/><rect x="1022.500" y="455" width="2.500" height="2.500" stroke="#222"/><rect x="1034" y="464" width="2.500" height="2.500" stroke="#222"/></g><g fill="none" stroke-width="1.300"><path d="M1024 486 v-15 h13" stroke="#222"/><path d="M1024 472 l12 12" stroke="#222"/><path d="M1024 482 l10 -10" stroke="#1a3a9a"/></g><circle cx="1034.500" cy="483" r="4.500" fill="#1e78e0"/><rect x="1034" y="481.500" width="1.200" height="4" fill="#fff"/><rect x="1034" y="479.500" width="1.200" height="1.200" fill="#fff"/><g fill="none" stroke-width="1.400"><path d="M1026 506 l11 -11" stroke="#222"/><path d="M1025 492 l7 8" stroke="#222"/><rect x="1024.500" y="490.500" width="3" height="3" stroke="#1a3a9a"/></g><g fill="none" stroke="#2a7a3a" stroke-width="1.200"><path d="M1391 380 l4 -8 l8 -5" stroke-dasharray="2 1.200"/><rect x="1389.500" y="379" width="2.500" height="2.500"/><rect x="1394" y="370.500" width="2.500" height="2.500"/><rect x="1402" y="365.500" width="2.500" height="2.500"/></g><path d="M1398.500 371 v9 l2 -2 l1.500 3.500 l1.500 -0.700 l-1.500 -3.300 h2.800z" fill="#fff" stroke="#111" stroke-width="0.800"/><g fill="none" stroke-width="1.200"><path d="M1253 478 v-13 h12" stroke="#1a3a9a"/><path d="M1253 476 l11 -10" stroke="#1a3a9a"/><path d="M1255 466 q3 5 9 6" stroke="#1a3a9a"/></g><rect x="1251" y="520.500" width="16" height="4.500" fill="#f0c030" stroke="#806010" stroke-width="0.700"/><path d="M1251.500 514 v4 M1266.500 514 v4" stroke="#1a3a9a" stroke-width="1.100"/><path d="M1252 516 h14" stroke="#1a3a9a" stroke-width="1.100" stroke-dasharray="1.500 1.200"/><circle cx="1394.500" cy="635" r="4.200" fill="#e8f0f8" stroke="#7a8a9a" stroke-width="1.200"/><path d="M1392.500 635 h4 M1394.500 633 v4" stroke="#5a6a7a" stroke-width="0.900"/><path d="M1398 638.500 l5 5" stroke="#c8a070" stroke-width="2.200"/></svg>
</body></html>
